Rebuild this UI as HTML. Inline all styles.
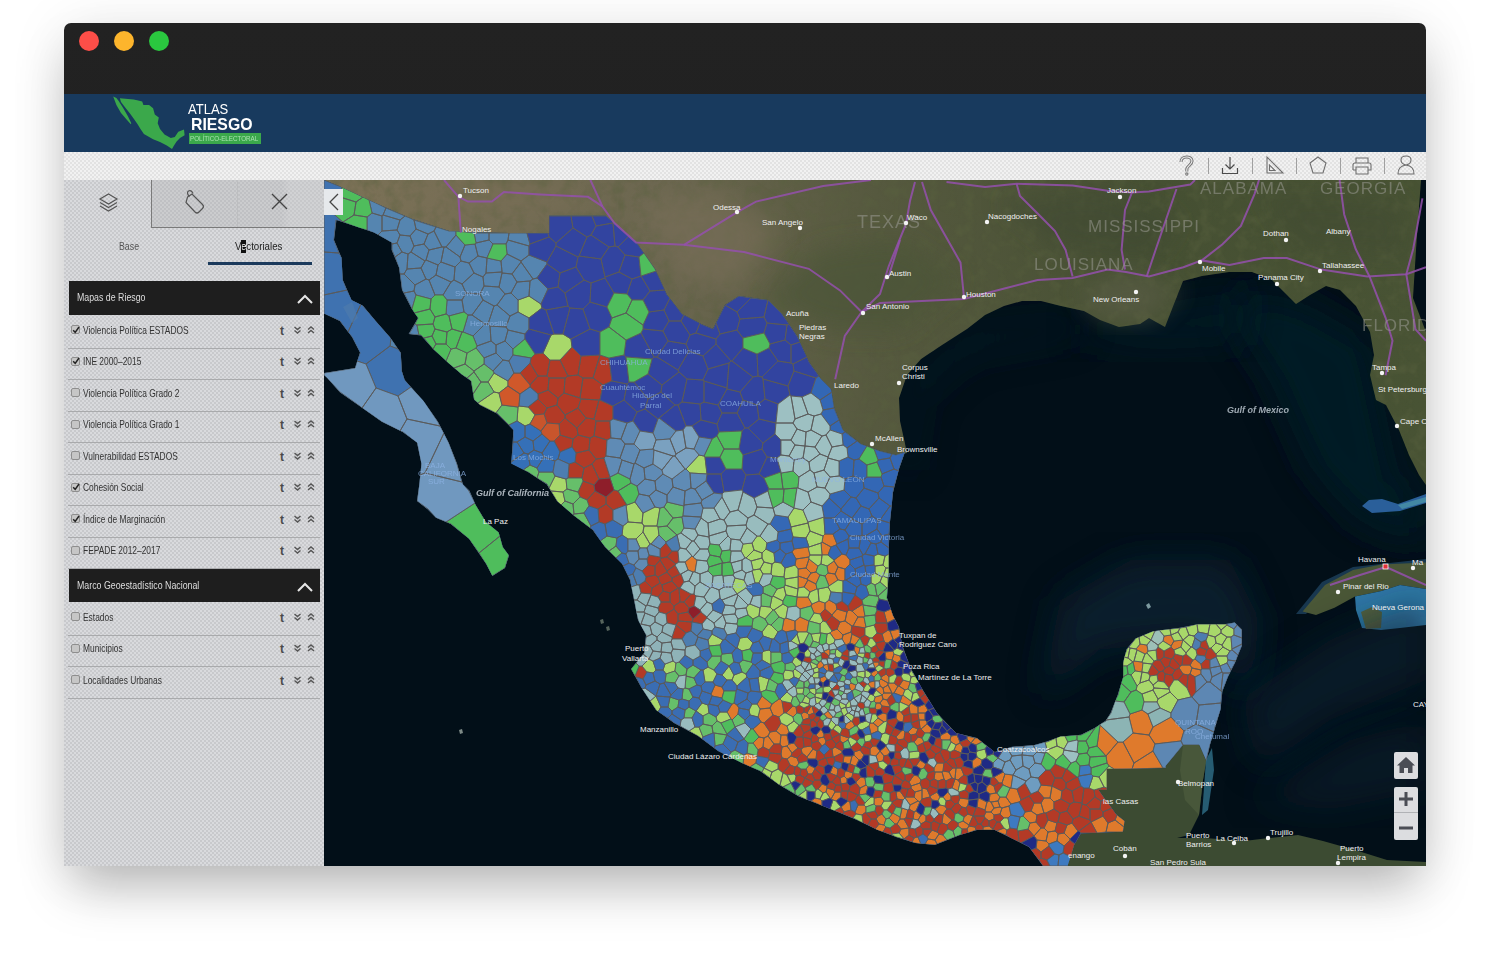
<!DOCTYPE html>
<html><head><meta charset="utf-8">
<style>
*{margin:0;padding:0;box-sizing:border-box}
html,body{width:1485px;height:958px;overflow:hidden;background:#fff;font-family:"Liberation Sans",sans-serif}
.a{position:absolute}
#win{left:64px;top:23px;width:1362px;height:843px;border-radius:7px 7px 0 0;background:linear-gradient(#222 0,#1c1c1c 100%);box-shadow:0 28px 48px -8px rgba(0,0,0,0.25),0 4px 60px 0 rgba(0,0,0,0.09)}
.dot{top:31px;width:20px;height:20px;border-radius:50%}
#hdr{left:64px;top:94px;width:1362px;height:58px;background:#183a5e}
#tb{left:64px;top:152px;width:1362px;height:28px;background:repeating-conic-gradient(#f1f1f1 0 25%,#e2e2e2 0 50%) 0 0/4px 4px}
#side{left:64px;top:180px;width:260px;height:686px;background:repeating-conic-gradient(#d9dadd 0 25%,#c8c9cc 0 50%) 0 0/4px 4px}
#map{left:324px;top:180px;width:1102px;height:686px;background:#0b1620;overflow:hidden}
.sep{top:158px;width:1px;height:16px;background:#a0a0a0}
.st{white-space:nowrap;transform-origin:0 0;transform:scaleX(.8)}
.row{left:68px;width:252px;height:1px;background:#a9aaac}
.cb{left:71px;width:9px;height:9px;border:1px solid #8e8e8e;border-radius:2px;background:#c6c6c6}
.lbl{left:83px;font-size:10.5px;color:#333}
.ti{left:280px;font-size:12px;font-weight:bold;color:#4a4a4a}
.sech{left:69px;width:251px;height:34px;background:#1e1e1e}
.sect{left:77px;font-size:11px;color:#ddd}
</style></head><body>
<div id="win" class="a"></div>
<div class="a dot" style="left:79px;background:#fd4e48"></div>
<div class="a dot" style="left:114px;background:#fdb52c"></div>
<div class="a dot" style="left:149px;background:#2ac73f"></div>
<div id="hdr" class="a"></div>
<!-- logo -->
<svg class="a" style="left:105px;top:90px" width="90" height="62" viewBox="105 90 90 62">
<path fill="#3ba84b" d="M119.9,98.2 L133.6,99.4 L137.1,100.3 L142.2,101.4 L143.4,104.9 L149.1,104.9 L153.1,108.3 L154.8,114.6 L158.8,117.5 L157.7,123.2 L160,128.9 L164.5,134.6 L170.8,138.1 L174.8,136.9 L178.3,131.8 L184,129.5 L184.6,135.2 L180,138.1 L176.6,141.5 L173.7,146.1 L172,149 L166.8,145.5 L160,142.1 L153.1,139.2 L143.9,134.1 L140.5,128.9 L137.6,124.3 L133.6,118.6 L129.6,112.9 L125,107.2 L121,102 Z M113.2,96.6 L116.4,98 L118.7,100.9 L123.3,108.3 L127.9,116.3 L131.3,123.2 L130.8,124.3 L126.8,119.8 L121,112.9 L116.4,104.9 Z"/>
</svg>
<div class="a" style="left:188px;top:101px;font-size:14px;color:#fff;white-space:nowrap;transform-origin:0 0;transform:scaleX(.93)">ATLAS</div>
<div class="a" style="left:191px;top:115px;font-size:17px;font-weight:bold;color:#fff;white-space:nowrap;transform-origin:0 0;transform:scaleX(.93)">RIESGO</div>
<div class="a" style="left:189px;top:133px;width:72px;height:11px;background:#3ba84b"></div>
<div class="a" style="left:190px;top:134px;font-size:8px;color:#a9e2b0;white-space:nowrap;transform-origin:0 0;transform:scaleX(.78)">POLÍTICO-ELECTORAL</div>

<div id="tb" class="a"></div>
<!-- toolbar icons -->
<svg class="a" style="left:1170px;top:152px" width="256" height="28" viewBox="1170 152 256 28" fill="none" stroke="#6e6e6e" stroke-width="1.1">
<path d="M1181,162 C1181,155.5 1192,155.5 1192,161 C1192,165 1186.8,166 1186.8,169 L1186.8,171.5" stroke="#7a7a7a" stroke-width="3.2"/>
<path d="M1181,162 C1181,155.5 1192,155.5 1192,161 C1192,165 1186.8,166 1186.8,169 L1186.8,171.5" stroke="#ececec" stroke-width="1.1"/>
<circle cx="1186.8" cy="174" r="1.7" fill="#7a7a7a" stroke="none"/><circle cx="1186.8" cy="174" r="0.6" fill="#ececec" stroke="none"/>
<path d="M1230,157 L1230,169 M1225.5,164.5 L1230,169 L1234.5,164.5 M1222.5,168 L1222.5,173.5 L1237.5,173.5 L1237.5,168" stroke="#4c4c4c" stroke-width="1.2"/>
<path d="M1267,157 L1267,173 L1283,173 Z M1269.5,165 L1269.5,170.5 L1275,170.5 Z"/>
<path d="M1318,157 L1326,163 L1323,173 L1313,173 L1310,163 Z"/>
<path d="M1356,163 L1356,158 L1368,158 L1368,163 M1353,170 L1353,165 Q1353,163 1355,163 L1369,163 Q1371,163 1371,165 L1371,170 L1368,170 M1356,170 L1353,170 M1356,167 L1368,167 L1368,174 L1356,174 Z"/>
<path d="M1398,174 Q1398,166 1406,165 Q1414,166 1414,174 Z M1406,165 Q1401,164 1401,160 Q1401,156 1406,156 Q1411,156 1411,160 Q1411,164 1406,165"/>
</svg>
<div class="a sep" style="left:1208px"></div>
<div class="a sep" style="left:1252px"></div>
<div class="a sep" style="left:1296px"></div>
<div class="a sep" style="left:1340px"></div>
<div class="a sep" style="left:1384px"></div>

<div id="side" class="a"></div>
<!-- tabs -->
<div class="a" style="left:151px;top:180px;width:173px;height:48px;background:linear-gradient(90deg,rgba(255,255,255,0) 0,rgba(255,255,255,0) 75%,rgba(255,255,255,.12) 80%,rgba(255,255,255,.12) 100%),repeating-conic-gradient(#cbccce 0 25%,#bfc0c3 0 50%) 0 0/4px 4px;border-left:1px solid #7a7a7a;border-bottom:1px solid #7a7a7a"></div>
<div class="a" style="left:237px;top:181px;width:1px;height:46px;background:#bdbec0"></div>
<svg class="a" style="left:90px;top:185px" width="240" height="36" viewBox="90 185 240 36" fill="none" stroke="#555" stroke-width="1.2">
<path d="M108.5,194 L117,199 L108.5,204 L100,199 Z"/>
<path d="M100,202.5 L108.5,207.5 L117,202.5"/>
<path d="M100,206 L108.5,211 L117,206"/>
<path d="M187.5,197 L192,194 L202.5,204.5 Q204.5,206.5 202.5,208.5 L199,212 Q197,214 195,212 L186,202.5 Z"/>
<path d="M189.5,196.5 Q186,193 188.5,191 Q191,189.5 193,193.5"/>
<path d="M272,194 L287,209 M287,194 L272,209" stroke="#444" stroke-width="1.4"/>
</svg>
<div class="a st" style="left:119px;top:240px;font-size:11px;color:#555">Base</div>
<div class="a" style="left:235px;top:240px;font-size:11px;color:#222;white-space:nowrap;transform-origin:0 0;transform:scaleX(.88)">Vectoriales</div>
<div class="a" style="left:241px;top:240px;width:5px;height:12.5px;background:#111"></div>
<div class="a" style="left:240.6px;top:240px;font-size:11px;color:#fff;white-space:nowrap;transform-origin:0 0;transform:scaleX(.88);clip-path:inset(0 0 0 1px)">e</div>
<div class="a" style="left:208px;top:262px;width:104px;height:3px;background:#1b3a5c"></div>

<!-- section 1 -->
<div class="a sech" style="top:281px"></div>
<div class="a st sect" style="top:291px">Mapas de Riesgo</div>
<svg class="a" style="left:296px;top:292px" width="20" height="14" viewBox="0 0 20 14"><path d="M2,11 L9,4 L16,11" fill="none" stroke="#e6e6e6" stroke-width="2"/></svg>

<div class="a cb" style="top:325.0px"></div>
<svg class="a" style="left:72px;top:325.5px" width="8" height="8" viewBox="0 0 8 8"><path d="M1.2,4.2 L3.2,6.4 L7,1" fill="none" stroke="#222" stroke-width="1.5"/></svg>
<div class="a st lbl" style="top:323.5px">Violencia Política ESTADOS</div>
<div class="a ti" style="top:323.5px">t</div>
<svg class="a" style="left:293px;top:325.5px" width="24" height="9" viewBox="0 0 24 9"><path d="M1.5,1 L4.5,3.5 L7.5,1 M1.5,4.5 L4.5,7 L7.5,4.5 M15,3.5 L18,1 L21,3.5 M15,7 L18,4.5 L21,7" fill="none" stroke="#555" stroke-width="1.4"/></svg>
<div class="a cb" style="top:356.5px"></div>
<svg class="a" style="left:72px;top:357.0px" width="8" height="8" viewBox="0 0 8 8"><path d="M1.2,4.2 L3.2,6.4 L7,1" fill="none" stroke="#222" stroke-width="1.5"/></svg>
<div class="a st lbl" style="top:355.0px">INE 2000–2015</div>
<div class="a ti" style="top:355.0px">t</div>
<svg class="a" style="left:293px;top:357.0px" width="24" height="9" viewBox="0 0 24 9"><path d="M1.5,1 L4.5,3.5 L7.5,1 M1.5,4.5 L4.5,7 L7.5,4.5 M15,3.5 L18,1 L21,3.5 M15,7 L18,4.5 L21,7" fill="none" stroke="#555" stroke-width="1.4"/></svg>
<div class="a cb" style="top:388.0px"></div>
<div class="a st lbl" style="top:386.5px">Violencia Política Grado 2</div>
<div class="a ti" style="top:386.5px">t</div>
<svg class="a" style="left:293px;top:388.5px" width="24" height="9" viewBox="0 0 24 9"><path d="M1.5,1 L4.5,3.5 L7.5,1 M1.5,4.5 L4.5,7 L7.5,4.5 M15,3.5 L18,1 L21,3.5 M15,7 L18,4.5 L21,7" fill="none" stroke="#555" stroke-width="1.4"/></svg>
<div class="a cb" style="top:419.5px"></div>
<div class="a st lbl" style="top:418.0px">Violencia Política Grado 1</div>
<div class="a ti" style="top:418.0px">t</div>
<svg class="a" style="left:293px;top:420.0px" width="24" height="9" viewBox="0 0 24 9"><path d="M1.5,1 L4.5,3.5 L7.5,1 M1.5,4.5 L4.5,7 L7.5,4.5 M15,3.5 L18,1 L21,3.5 M15,7 L18,4.5 L21,7" fill="none" stroke="#555" stroke-width="1.4"/></svg>
<div class="a cb" style="top:451.0px"></div>
<div class="a st lbl" style="top:449.5px">Vulnerabilidad ESTADOS</div>
<div class="a ti" style="top:449.5px">t</div>
<svg class="a" style="left:293px;top:451.5px" width="24" height="9" viewBox="0 0 24 9"><path d="M1.5,1 L4.5,3.5 L7.5,1 M1.5,4.5 L4.5,7 L7.5,4.5 M15,3.5 L18,1 L21,3.5 M15,7 L18,4.5 L21,7" fill="none" stroke="#555" stroke-width="1.4"/></svg>
<div class="a cb" style="top:482.5px"></div>
<svg class="a" style="left:72px;top:483.0px" width="8" height="8" viewBox="0 0 8 8"><path d="M1.2,4.2 L3.2,6.4 L7,1" fill="none" stroke="#222" stroke-width="1.5"/></svg>
<div class="a st lbl" style="top:481.0px">Cohesión Social</div>
<div class="a ti" style="top:481.0px">t</div>
<svg class="a" style="left:293px;top:483.0px" width="24" height="9" viewBox="0 0 24 9"><path d="M1.5,1 L4.5,3.5 L7.5,1 M1.5,4.5 L4.5,7 L7.5,4.5 M15,3.5 L18,1 L21,3.5 M15,7 L18,4.5 L21,7" fill="none" stroke="#555" stroke-width="1.4"/></svg>
<div class="a cb" style="top:514.0px"></div>
<svg class="a" style="left:72px;top:514.5px" width="8" height="8" viewBox="0 0 8 8"><path d="M1.2,4.2 L3.2,6.4 L7,1" fill="none" stroke="#222" stroke-width="1.5"/></svg>
<div class="a st lbl" style="top:512.5px">Índice de Marginación</div>
<div class="a ti" style="top:512.5px">t</div>
<svg class="a" style="left:293px;top:514.5px" width="24" height="9" viewBox="0 0 24 9"><path d="M1.5,1 L4.5,3.5 L7.5,1 M1.5,4.5 L4.5,7 L7.5,4.5 M15,3.5 L18,1 L21,3.5 M15,7 L18,4.5 L21,7" fill="none" stroke="#555" stroke-width="1.4"/></svg>
<div class="a cb" style="top:545.5px"></div>
<div class="a st lbl" style="top:544.0px">FEPADE 2012–2017</div>
<div class="a ti" style="top:544.0px">t</div>
<svg class="a" style="left:293px;top:546.0px" width="24" height="9" viewBox="0 0 24 9"><path d="M1.5,1 L4.5,3.5 L7.5,1 M1.5,4.5 L4.5,7 L7.5,4.5 M15,3.5 L18,1 L21,3.5 M15,7 L18,4.5 L21,7" fill="none" stroke="#555" stroke-width="1.4"/></svg>
<div class="a cb" style="top:612.0px"></div>
<div class="a st lbl" style="top:610.5px">Estados</div>
<div class="a ti" style="top:610.5px">t</div>
<svg class="a" style="left:293px;top:612.5px" width="24" height="9" viewBox="0 0 24 9"><path d="M1.5,1 L4.5,3.5 L7.5,1 M1.5,4.5 L4.5,7 L7.5,4.5 M15,3.5 L18,1 L21,3.5 M15,7 L18,4.5 L21,7" fill="none" stroke="#555" stroke-width="1.4"/></svg>
<div class="a cb" style="top:643.5px"></div>
<div class="a st lbl" style="top:642.0px">Municipios</div>
<div class="a ti" style="top:642.0px">t</div>
<svg class="a" style="left:293px;top:644.0px" width="24" height="9" viewBox="0 0 24 9"><path d="M1.5,1 L4.5,3.5 L7.5,1 M1.5,4.5 L4.5,7 L7.5,4.5 M15,3.5 L18,1 L21,3.5 M15,7 L18,4.5 L21,7" fill="none" stroke="#555" stroke-width="1.4"/></svg>
<div class="a cb" style="top:675.0px"></div>
<div class="a st lbl" style="top:673.5px">Localidades Urbanas</div>
<div class="a ti" style="top:673.5px">t</div>
<svg class="a" style="left:293px;top:675.5px" width="24" height="9" viewBox="0 0 24 9"><path d="M1.5,1 L4.5,3.5 L7.5,1 M1.5,4.5 L4.5,7 L7.5,4.5 M15,3.5 L18,1 L21,3.5 M15,7 L18,4.5 L21,7" fill="none" stroke="#555" stroke-width="1.4"/></svg>
<div class="a row" style="top:347.5px"></div>
<div class="a row" style="top:379.0px"></div>
<div class="a row" style="top:410.5px"></div>
<div class="a row" style="top:442.0px"></div>
<div class="a row" style="top:473.5px"></div>
<div class="a row" style="top:505.0px"></div>
<div class="a row" style="top:536.5px"></div>
<div class="a row" style="top:567.5px"></div>
<div class="a row" style="top:634.5px"></div>
<div class="a row" style="top:666.0px"></div>
<div class="a row" style="top:697.5px"></div>
<!-- section 2 -->
<div class="a sech" style="top:569px;height:33px"></div>
<div class="a st sect" style="top:579px">Marco Geoestadístico Nacional</div>
<svg class="a" style="left:296px;top:580px" width="20" height="14" viewBox="0 0 20 14"><path d="M2,11 L9,4 L16,11" fill="none" stroke="#e6e6e6" stroke-width="2"/></svg>

<div id="map" class="a">
<svg width="1102" height="686" viewBox="324 180 1102 686" style="position:absolute;left:0;top:0"><rect x="324" y="180" width="1102" height="686" fill="#020f18"/>
<filter id="bl" x="-20%" y="-20%" width="140%" height="140%"><feGaussianBlur stdDeviation="18"/></filter>
<polygon fill="#061c26" points="1240.0,290.0 1300.0,300.0 1370.0,340.0 1400.0,480.0 1426.0,500.0 1426.0,545.0 1360.0,525.0 1310.0,470.0 1270.0,380.0 1230.0,320.0" opacity="0.9" filter="url(#bl)"/>
<polygon fill="#061c26" points="1080.0,320.0 1180.0,300.0 1250.0,290.0 1240.0,345.0 1150.0,350.0 1080.0,340.0" opacity="0.7" filter="url(#bl)"/>
<polygon fill="#061c26" points="900.0,470.0 905.0,380.0 960.0,330.0 1080.0,315.0 1080.0,335.0 970.0,355.0 922.0,400.0 915.0,470.0" opacity="0.6" filter="url(#bl)"/>
<polygon fill="#072030" points="1040.0,700.0 1060.0,600.0 1130.0,560.0 1230.0,560.0 1260.0,620.0 1250.0,700.0 1200.0,640.0 1100.0,650.0" opacity="0.8" filter="url(#bl)"/>
<defs><linearGradient id="usg" x1="324" y1="0" x2="1426" y2="0" gradientUnits="userSpaceOnUse"><stop offset="0" stop-color="#7c7257"/><stop offset="0.3" stop-color="#6c6750"/><stop offset="0.5" stop-color="#56593f"/><stop offset="0.75" stop-color="#465033"/><stop offset="1" stop-color="#485334"/></linearGradient></defs>
<polygon fill="url(#usg)" points="324.0,180.0 1426.0,180.0 1426.0,485.0 1419.0,475.0 1409.0,455.0 1399.0,430.0 1386.0,405.0 1376.0,400.0 1370.0,375.0 1374.0,355.0 1370.0,332.0 1356.0,306.0 1340.0,290.0 1326.0,286.0 1310.0,295.0 1296.0,304.0 1287.0,295.0 1271.0,279.0 1252.0,272.0 1229.0,272.0 1202.0,276.0 1183.0,281.0 1172.0,309.0 1165.0,327.0 1149.0,318.0 1140.0,324.0 1119.0,327.0 1100.0,320.0 1084.0,311.0 1061.0,306.0 1041.0,301.0 1022.0,301.0 1004.0,306.0 985.0,315.0 967.0,329.0 942.0,345.0 921.0,359.0 907.0,375.0 899.0,398.0 900.0,421.0 907.0,453.0 896.0,455.0 880.0,451.0 861.0,444.0 843.0,430.0 834.0,407.0 831.0,389.0 821.0,379.0 809.0,362.0 797.0,336.0 782.0,314.0 768.0,300.0 739.0,296.0 725.0,305.0 713.0,329.0 701.0,324.0 682.0,314.0 667.0,295.0 655.0,269.0 636.0,242.0 614.0,223.0 605.6,215.7 549.0,215.7 549.0,233.4 474.0,232.6 449.0,231.0 411.6,218.8 374.0,202.5 336.5,185.0" />
<filter id="turb" x="0" y="0" width="100%" height="100%"><feTurbulence type="fractalNoise" baseFrequency="0.08" numOctaves="3" seed="4"/><feColorMatrix values="0 0 0 0 0.1  0 0 0 0 0.12  0 0 0 0 0.05  0 0 0 -2.2 1.25"/></filter>
<clipPath id="usclip"><polygon points="324.0,180.0 1426.0,180.0 1426.0,485.0 1419.0,475.0 1409.0,455.0 1399.0,430.0 1386.0,405.0 1376.0,400.0 1370.0,375.0 1374.0,355.0 1370.0,332.0 1356.0,306.0 1340.0,290.0 1326.0,286.0 1310.0,295.0 1296.0,304.0 1287.0,295.0 1271.0,279.0 1252.0,272.0 1229.0,272.0 1202.0,276.0 1183.0,281.0 1172.0,309.0 1165.0,327.0 1149.0,318.0 1140.0,324.0 1119.0,327.0 1100.0,320.0 1084.0,311.0 1061.0,306.0 1041.0,301.0 1022.0,301.0 1004.0,306.0 985.0,315.0 967.0,329.0 942.0,345.0 921.0,359.0 907.0,375.0 899.0,398.0 900.0,421.0 907.0,453.0 896.0,455.0 880.0,451.0 861.0,444.0 843.0,430.0 834.0,407.0 831.0,389.0 821.0,379.0 809.0,362.0 797.0,336.0 782.0,314.0 768.0,300.0 739.0,296.0 725.0,305.0 713.0,329.0 701.0,324.0 682.0,314.0 667.0,295.0 655.0,269.0 636.0,242.0 614.0,223.0 605.6,215.7 549.0,215.7 549.0,233.4 474.0,232.6 449.0,231.0 411.6,218.8 374.0,202.5 336.5,185.0"/></clipPath>
<rect x="324" y="180" width="1102" height="320" filter="url(#turb)" clip-path="url(#usclip)" opacity="0.55"/>
<filter id="bl2" x="-30%" y="-30%" width="160%" height="160%"><feGaussianBlur stdDeviation="12"/></filter>
<polygon fill="#4b5539" points="760.0,300.0 820.0,250.0 900.0,240.0 960.0,280.0 900.0,330.0 830.0,330.0" opacity="0.7" filter="url(#bl2)"/>
<polygon fill="#7a705a" points="640.0,200.0 720.0,190.0 780.0,230.0 740.0,290.0 680.0,280.0" opacity="0.6" filter="url(#bl2)"/>
<polygon fill="#7b7059" points="380.0,185.0 560.0,185.0 600.0,205.0 520.0,215.0 420.0,205.0" opacity="0.5" filter="url(#bl2)"/>
<polygon fill="#3c4632" points="1000.0,200.0 1100.0,190.0 1180.0,220.0 1150.0,260.0 1060.0,250.0" opacity="0.5" filter="url(#bl2)"/>
<polygon fill="#3f4a33" points="1260.0,190.0 1400.0,200.0 1410.0,260.0 1300.0,250.0" opacity="0.5" filter="url(#bl2)"/>
<polygon fill="#5d5f48" points="1080.0,290.0 1130.0,270.0 1180.0,290.0 1150.0,320.0 1100.0,318.0" opacity="0.6" filter="url(#bl2)"/>
<polygon fill="#020f18" points="1421.0,180.0 1426.0,180.0 1426.0,332.0 1413.0,298.0 1416.0,250.0" />
<polygon fill="#2a5f9a" points="1362.0,506.0 1369.0,500.0 1382.0,499.0 1398.0,504.0 1426.0,494.0 1426.0,503.0 1400.0,511.0 1372.0,513.0" />
<polygon fill="#4f9aa8" points="1398.0,505.0 1426.0,497.0 1426.0,502.0 1402.0,509.0" opacity="0.7"/>
<polygon fill="#2e5f86" points="1296.0,614.0 1322.0,582.0 1353.0,567.0 1426.0,559.0 1426.0,566.0 1356.0,574.0 1328.0,590.0 1306.0,614.0" opacity="0.5"/>
<polygon fill="#4a5737" points="1302.6,611.5 1325.0,585.0 1353.0,570.0 1381.5,564.5 1426.0,562.6 1426.0,589.0 1400.0,585.0 1381.5,591.0 1355.0,596.5 1334.5,607.7 1316.0,615.0" />
<polygon fill="#2f78a6" points="1355.0,596.5 1381.5,591.0 1400.0,585.0 1426.0,589.0 1426.0,625.0 1400.0,628.0 1381.0,630.0 1362.0,628.0 1356.0,610.0" />
<polygon fill="#55613f" points="1361.0,612.0 1372.0,607.0 1382.0,612.0 1381.0,628.0 1366.0,629.0" />
<polygon fill="#0a2233" points="1240.0,700.0 1330.0,640.0 1426.0,600.0 1426.0,680.0 1330.0,720.0 1260.0,770.0" opacity="0.6" filter="url(#bl)"/>
<polygon fill="#0a2233" points="1250.0,800.0 1350.0,740.0 1426.0,720.0 1426.0,790.0 1330.0,810.0" opacity="0.5" filter="url(#bl)"/>
<polygon fill="#3c4b32" points="1100.0,769.0 1165.6,768.0 1165.6,766.0 1183.4,744.8 1199.3,744.8 1206.4,760.8 1203.0,780.0 1199.0,815.0 1189.0,835.0 1177.0,838.0 1205.0,838.0 1244.0,841.0 1269.0,838.0 1298.0,835.0 1323.0,841.0 1355.0,850.0 1387.0,860.0 1426.0,862.0 1426.0,866.0 1060.0,866.0 1074.0,845.6 1081.0,833.4 1123.0,831.7 1124.6,821.0 1116.0,814.0 1098.6,790.0 1107.0,790.0" />
<polygon fill="#4b5a3c" points="1183.0,745.0 1199.0,745.0 1206.0,761.0 1203.0,780.0 1199.0,815.0 1185.0,800.0 1180.0,770.0" opacity="0.8"/>
<polygon fill="#2f6f8a" points="1206.0,760.0 1212.0,748.0 1214.0,770.0 1208.0,810.0 1202.0,815.0" opacity="0.8"/>
<clipPath id="mexclip"><polygon points="324.0,180.0 336.5,185.0 374.0,202.5 411.6,218.8 449.0,231.0 474.0,232.6 549.0,233.4 549.0,215.7 605.6,215.7 612.0,221.0 614.0,223.0 636.0,242.0 655.0,269.0 667.0,295.0 682.0,314.0 701.0,324.0 713.0,329.0 725.0,305.0 739.0,296.0 768.0,300.0 782.0,314.0 797.0,336.0 809.0,362.0 821.0,379.0 831.0,389.0 834.0,407.0 843.0,430.0 861.0,444.0 880.0,451.0 896.0,455.0 905.0,452.0 899.0,469.0 893.0,492.6 890.0,522.0 888.7,551.0 888.7,574.5 887.0,597.8 893.0,615.4 899.0,627.0 902.0,644.6 910.6,668.0 922.0,688.5 937.0,713.0 956.0,733.0 977.0,738.0 994.7,752.0 1012.0,746.8 1034.5,745.0 1046.7,741.6 1060.5,736.4 1081.0,734.7 1095.0,727.7 1105.6,720.8 1110.6,712.9 1117.7,695.0 1123.0,677.4 1123.0,663.0 1126.6,649.0 1135.5,638.4 1153.0,631.3 1180.0,627.7 1197.6,624.2 1224.0,624.2 1234.8,622.4 1242.0,629.5 1242.0,645.5 1234.8,663.2 1227.7,677.4 1222.4,691.6 1220.6,709.3 1215.3,727.0 1210.0,744.8 1206.4,760.8 1199.3,744.8 1183.4,744.8 1165.6,766.0 1165.6,768.0 1107.0,769.0 1107.0,790.0 1098.6,790.0 1116.0,814.0 1124.6,821.0 1123.0,831.7 1081.0,833.4 1074.0,845.6 1067.5,866.0 1043.0,866.0 1029.0,847.0 1012.0,838.6 994.7,830.0 977.0,830.0 960.0,835.0 934.8,845.0 915.0,843.0 896.0,837.0 876.5,829.5 857.0,820.0 837.7,812.0 818.0,804.0 798.8,796.5 779.4,785.0 760.0,771.0 744.0,764.0 718.0,751.0 698.0,736.0 674.0,723.0 656.0,710.0 641.0,687.0 631.0,669.0 644.0,653.0 646.0,635.0 638.0,620.0 630.0,580.0 622.0,563.7 605.0,547.0 592.7,530.0 574.0,515.7 557.0,501.0 546.8,484.4 528.0,472.0 511.3,463.5 513.4,430.0 496.7,413.4 480.0,405.0 474.0,399.6 471.0,381.0 461.8,374.6 449.0,363.6 433.6,349.5 421.0,335.4 408.6,334.0 418.0,318.0 411.7,308.8 402.0,290.0 399.0,267.6 391.6,250.0 391.6,242.6 374.0,232.6 359.0,227.6 336.5,220.0 334.0,240.0 341.5,257.6 342.8,280.0 351.5,300.0 363.0,305.7 375.7,321.0 389.8,337.0 400.7,352.6 402.0,371.4 404.7,380.0 423.5,401.0 438.0,421.8 448.6,442.6 457.0,463.5 463.0,484.4 469.4,490.6 475.7,505.0 486.0,522.0 498.7,532.4 502.8,547.0 509.0,555.4 505.0,568.0 492.4,576.0 486.0,563.7 469.0,538.7 450.6,524.0 436.0,517.8 427.7,509.4 417.0,501.0 419.3,484.4 421.4,463.5 417.0,442.6 402.6,432.0 381.8,421.8 360.9,407.0 340.0,392.5 327.0,377.7 324.0,375.0 324.0,373.0 355.0,368.0 360.0,352.6 352.0,337.0 339.7,321.0 324.0,313.5"/></clipPath>
<polygon fill="#4d7db0" points="324.0,180.0 336.5,185.0 374.0,202.5 411.6,218.8 449.0,231.0 474.0,232.6 549.0,233.4 549.0,215.7 605.6,215.7 612.0,221.0 614.0,223.0 636.0,242.0 655.0,269.0 667.0,295.0 682.0,314.0 701.0,324.0 713.0,329.0 725.0,305.0 739.0,296.0 768.0,300.0 782.0,314.0 797.0,336.0 809.0,362.0 821.0,379.0 831.0,389.0 834.0,407.0 843.0,430.0 861.0,444.0 880.0,451.0 896.0,455.0 905.0,452.0 899.0,469.0 893.0,492.6 890.0,522.0 888.7,551.0 888.7,574.5 887.0,597.8 893.0,615.4 899.0,627.0 902.0,644.6 910.6,668.0 922.0,688.5 937.0,713.0 956.0,733.0 977.0,738.0 994.7,752.0 1012.0,746.8 1034.5,745.0 1046.7,741.6 1060.5,736.4 1081.0,734.7 1095.0,727.7 1105.6,720.8 1110.6,712.9 1117.7,695.0 1123.0,677.4 1123.0,663.0 1126.6,649.0 1135.5,638.4 1153.0,631.3 1180.0,627.7 1197.6,624.2 1224.0,624.2 1234.8,622.4 1242.0,629.5 1242.0,645.5 1234.8,663.2 1227.7,677.4 1222.4,691.6 1220.6,709.3 1215.3,727.0 1210.0,744.8 1206.4,760.8 1199.3,744.8 1183.4,744.8 1165.6,766.0 1165.6,768.0 1107.0,769.0 1107.0,790.0 1098.6,790.0 1116.0,814.0 1124.6,821.0 1123.0,831.7 1081.0,833.4 1074.0,845.6 1067.5,866.0 1043.0,866.0 1029.0,847.0 1012.0,838.6 994.7,830.0 977.0,830.0 960.0,835.0 934.8,845.0 915.0,843.0 896.0,837.0 876.5,829.5 857.0,820.0 837.7,812.0 818.0,804.0 798.8,796.5 779.4,785.0 760.0,771.0 744.0,764.0 718.0,751.0 698.0,736.0 674.0,723.0 656.0,710.0 641.0,687.0 631.0,669.0 644.0,653.0 646.0,635.0 638.0,620.0 630.0,580.0 622.0,563.7 605.0,547.0 592.7,530.0 574.0,515.7 557.0,501.0 546.8,484.4 528.0,472.0 511.3,463.5 513.4,430.0 496.7,413.4 480.0,405.0 474.0,399.6 471.0,381.0 461.8,374.6 449.0,363.6 433.6,349.5 421.0,335.4 408.6,334.0 418.0,318.0 411.7,308.8 402.0,290.0 399.0,267.6 391.6,250.0 391.6,242.6 374.0,232.6 359.0,227.6 336.5,220.0 334.0,240.0 341.5,257.6 342.8,280.0 351.5,300.0 363.0,305.7 375.7,321.0 389.8,337.0 400.7,352.6 402.0,371.4 404.7,380.0 423.5,401.0 438.0,421.8 448.6,442.6 457.0,463.5 463.0,484.4 469.4,490.6 475.7,505.0 486.0,522.0 498.7,532.4 502.8,547.0 509.0,555.4 505.0,568.0 492.4,576.0 486.0,563.7 469.0,538.7 450.6,524.0 436.0,517.8 427.7,509.4 417.0,501.0 419.3,484.4 421.4,463.5 417.0,442.6 402.6,432.0 381.8,421.8 360.9,407.0 340.0,392.5 327.0,377.7 324.0,375.0 324.0,373.0 355.0,368.0 360.0,352.6 352.0,337.0 339.7,321.0 324.0,313.5" />
<g clip-path="url(#mexclip)">
<g stroke="#5a5a5a" stroke-width="0.9" stroke-linejoin="round">
<path fill="#df7a2c" d="M905 798 900 791 896 792 897 799 903 800 905 798ZM797 766 799 763 797 758 791 756 787 759 790 765 795 767ZM1149 735 1155 744 1181 741 1184 731 1171 717 1153 727ZM1058 834 1057 841 1064 846 1070 840 1070 839 1064 833ZM845 621 852 626 853 626 858 617 852 611 849 610 847 612ZM1011 788 1010 788 1006 797 1011 804 1019 802 1021 800 1017 789ZM972 761 973 769 981 765 982 760 977 757ZM834 560 834 561 838 567 845 569 850 564 850 560 846 555 842 554ZM830 633 835 640 842 639 843 635 837 629 832 631ZM890 631 888 630 882 634 884 641 886 643 888 643 893 639ZM1004 818 1008 818 1011 815 1009 806 1002 808 1000 814ZM770 732 764 723 761 722 753 729 759 737 764 738 768 736ZM1044 798 1050 798 1052 786 1052 786 1041 785 1038 791ZM943 835 939 834 935 840 937 844 947 840ZM1142 710 1130 714 1129 717 1133 733 1149 735 1153 727 1148 714ZM1134 763 1123 742 1118 742 1106 756 1106 756 1107 763 1109 766 1114 769 1132 769ZM1153 751 1134 763 1132 769 1163 768ZM835 792 831 799 833 800 836 801 841 797 841 792ZM914 797 918 801 920 802 922 799 922 790 915 792ZM738 714 739 708 737 705 734 703 732 704 727 712 731 719 732 720ZM834 790 827 788 826 792 830 798 831 799 835 792ZM852 634 851 632 843 635 842 639 845 644 846 645 850 643ZM804 587 808 580 807 579 798 576 798 577 798 588ZM905 732 903 730 901 731 896 737 898 740 904 739ZM877 716 878 718 884 722 887 721 887 720 887 714 883 713ZM860 788 866 785 865 778 861 777 856 782 856 783ZM930 797 932 800 938 801 940 797 937 792 930 796ZM1091 822 1097 833 1106 832 1108 823 1103 816ZM832 616 840 622 845 621 847 612 837 609 832 615ZM817 667 819 669 823 667 824 665 821 661 819 662 817 665ZM876 756 880 751 876 746 873 746 870 749 870 755ZM939 834 937 832 932 830 927 837 928 839 935 840ZM1142 662 1134 661 1133 662 1133 662 1135 671 1142 672 1143 663ZM968 805 969 800 968 799 960 798 958 803 962 807 966 808ZM1057 823 1048 820 1044 828 1048 832 1055 831ZM998 801 1000 797 997 793 996 793 990 794 989 801 991 802ZM834 757 842 753 842 751 835 747 832 749 833 757ZM882 695 883 699 887 700 892 694 892 694 892 693 884 693 882 695ZM825 603 825 609 832 615 837 609 836 604 829 600ZM812 604 811 606 814 613 820 614 825 609 825 603 819 601ZM850 802 848 801 841 807 844 812 851 810ZM808 597 797 597 796 606 800 609 811 606 812 604ZM958 826 962 829 967 829 969 826 969 825 963 821 958 823ZM918 713 918 707 911 703 909 706 909 706 910 714 911 714 918 714ZM849 685 850 689 852 691 855 689 856 685 851 683ZM847 779 844 776 840 778 841 784 847 783ZM813 749 811 746 804 747 801 749 802 753 807 757ZM1055 831 1048 832 1046 841 1049 844 1057 841 1058 834ZM773 715 770 708 760 709 758 717 761 722 764 723ZM914 742 917 746 923 743 924 742 922 738 918 737ZM822 801 820 799 815 798 811 801 818 804 822 806ZM880 703 882 706 890 707 890 706 887 700 883 699ZM1030 823 1036 822 1037 815 1031 811 1025 812 1023 816ZM897 712 896 718 898 721 903 722 904 716 901 712 899 711ZM795 621 795 630 798 632 807 632 809 621 800 617ZM809 557 796 559 795 565 798 569 806 568 809 559ZM838 567 834 561 827 566 828 573 835 574ZM919 720 919 720 925 720 925 713 918 713 918 714ZM808 547 794 549 792 552 796 559 809 557 810 555ZM843 762 849 764 850 764 852 756 844 756ZM879 824 875 829 876 830 883 832 886 827 884 825ZM968 833 976 830 975 827 969 826 967 829ZM724 691 722 687 715 685 711 694 712 696 722 698ZM685 562 688 570 693 572 695 572 697 560 693 557 692 556ZM781 754 782 758 787 759 791 756 792 753 787 746 782 747ZM1048 832 1044 828 1041 828 1034 836 1034 836 1037 840 1046 841ZM782 747 787 746 789 744 787 735 781 735 780 744ZM1115 820 1108 823 1106 832 1123 832 1124 827ZM979 798 978 799 977 807 985 810 987 802ZM1179 668 1183 674 1188 675 1190 674 1192 668 1190 665 1182 665 1180 666ZM880 751 884 756 888 755 890 752 886 746ZM856 766 859 760 854 755 852 756 850 764 855 766ZM824 737 824 734 821 729 816 735 819 738ZM984 816 985 818 989 821 994 819 994 815 991 812 986 812ZM937 763 934 768 934 771 935 772 942 772 943 771 944 763ZM909 782 911 786 920 783 921 780 918 776 914 775ZM927 724 921 729 925 733 930 733 932 729ZM747 753 744 755 743 764 744 764 750 767 756 763 757 756ZM774 744 768 736 764 738 763 747 769 750ZM918 820 921 824 926 821 926 816 923 814 921 815ZM870 723 870 723 869 726 871 734 878 731 878 727 873 723ZM1034 803 1031 811 1037 815 1044 813 1041 803ZM904 819 900 819 897 824 901 829 909 828ZM1054 809 1054 802 1050 798 1044 798 1041 803 1044 813 1046 813ZM893 813 892 814 889 818 895 824 897 824 900 819 900 817ZM1010 788 1011 788 1013 775 1005 774 1002 783 1003 785ZM911 788 915 792 922 790 922 788 920 783 911 786ZM894 683 889 683 888 683 888 685 892 693 892 694 894 693 898 686ZM1097 746 1106 756 1118 742 1100 725ZM784 713 782 701 780 699 779 699 772 704 770 708 773 715 779 717ZM854 752 854 755 859 760 861 760 864 755 860 750ZM884 693 883 688 880 686 876 689 876 690 882 695ZM1174 650 1181 647 1183 640 1174 641 1171 646 1171 647ZM874 804 876 806 881 806 884 801 881 797 874 798ZM898 686 894 693 902 696 903 695 905 690 899 686ZM825 744 826 741 824 737 819 738 818 741 822 746ZM881 709 882 706 880 703 876 703 875 708 877 710ZM797 713 796 707 793 706 786 713 793 717ZM895 619 893 615 891 609 884 612 887 623ZM1201 670 1202 669 1201 664 1195 659 1193 660 1190 665 1192 668ZM902 696 900 702 909 706 911 703 912 702 911 701 903 695ZM837 544 833 534 825 534 823 536 822 542 831 547 836 545ZM852 777 853 773 847 771 845 771 844 776 847 779ZM837 629 843 635 851 632 852 626 845 621 840 622ZM943 797 946 801 951 800 951 796 948 792ZM1070 839 1078 831 1072 823 1067 825 1064 833ZM808 759 816 759 817 751 813 749 807 757ZM809 559 806 568 811 573 816 572 818 566ZM916 811 920 802 920 802 918 801 910 805 909 809 914 812ZM863 605 863 604 852 611 858 617 864 617 865 616ZM876 819 879 824 884 825 886 819 882 814 878 816ZM827 718 831 719 833 717 828 711 824 714ZM976 745 982 742 977 738 975 738 971 743 971 743ZM894 654 893 651 885 652 886 659 892 660ZM1133 733 1123 742 1134 763 1153 751 1155 744 1149 735ZM935 809 939 814 943 815 944 813 947 809 945 806 940 805ZM892 693 888 685 883 688 884 693ZM1000 807 1002 808 1009 806 1011 804 1006 797 1000 797 998 801ZM925 713 928 710 925 705 925 704 918 707 918 713ZM960 742 957 735 951 736 950 740 951 742 956 745 960 743ZM1174 641 1171 635 1171 635 1164 636 1163 641 1171 646ZM859 795 859 795 866 794 868 787 866 785 860 788ZM935 840 928 839 925 844 935 845 937 844ZM964 817 963 821 969 825 973 816 973 816 968 814ZM883 688 888 685 888 683 881 679 879 681 880 686ZM1036 822 1030 823 1028 829 1034 836 1041 828ZM957 768 956 768 955 779 955 779 958 780 964 775 961 768ZM860 638 860 638 852 634 850 643 855 645ZM922 790 922 799 930 797 930 796 927 789 922 788ZM996 793 994 786 990 784 987 786 986 791 990 794ZM781 735 787 735 789 732 787 726 781 723 776 731ZM856 814 862 815 866 812 866 807 864 805 858 805 855 812ZM942 772 935 772 934 779 938 781 944 779ZM944 813 943 815 942 823 947 825 952 820ZM787 746 792 753 798 748 794 743 789 744ZM816 584 808 580 804 587 810 592 817 589ZM1124 827 1125 821 1117 815 1115 820ZM994 808 1000 807 998 801 991 802ZM825 676 820 678 820 681 823 683 827 679ZM1046 841 1037 840 1036 848 1041 852 1049 846 1049 844ZM952 778 949 772 943 771 942 772 944 779 946 781ZM914 838 912 842 915 843 921 844 918 837 917 837ZM837 776 838 769 833 766 830 773 837 776ZM786 618 784 619 782 630 786 632 795 630 795 621ZM909 828 901 829 899 833 904 839 909 835 909 828ZM760 709 770 708 772 704 762 696 757 704ZM881 677 881 679 888 683 889 683 889 677 886 674ZM967 739 971 743 975 738 967 736ZM845 728 849 730 855 726 852 721 851 721 846 724ZM989 801 987 802 985 810 986 812 991 812 994 808 991 802ZM845 580 845 569 838 567 835 574 838 580 843 581ZM897 663 901 660 900 656 894 654 892 660 892 660ZM806 568 798 569 798 576 807 579 811 573ZM942 740 950 740 951 736 947 732 941 735 940 738ZM873 723 878 727 884 722 878 718ZM809 718 809 715 807 713 804 712 801 714 803 720ZM883 761 884 756 880 751 880 751 876 756 878 762 878 762ZM823 667 827 671 829 671 828 664 828 664 824 665ZM890 631 893 639 894 640 900 636 899 629ZM871 673 871 675 874 677 878 673 878 672 876 670ZM918 729 913 727 908 732 911 735 916 734ZM764 738 759 737 753 743 758 750 763 747ZM924 768 926 764 920 760 916 766 921 769ZM807 579 808 580 816 584 820 575 816 572 811 573ZM927 722 925 720 919 720 920 728 921 729 927 724ZM1054 802 1061 799 1062 791 1052 786 1050 798ZM1007 830 1004 828 996 831 1006 835ZM1147 653 1148 651 1147 645 1140 644 1136 649 1137 650 1145 654ZM873 662 873 663 875 668 875 668 879 665 879 662ZM843 743 848 740 849 738 840 735 840 741ZM908 810 902 808 900 817 900 819 904 819 906 818ZM827 788 827 786 822 784 818 789 823 793 826 792ZM905 690 908 689 910 683 910 682 903 680 899 686ZM918 801 914 797 906 797 905 798 905 798 910 805ZM991 812 994 815 1000 814 1002 808 1000 807 994 808ZM829 586 838 580 835 574 828 573 825 576ZM960 783 958 780 955 779 952 788 958 791ZM874 701 876 703 880 703 883 699 882 695 875 697ZM1005 774 1003 772 994 777 999 783 1002 783ZM774 744 780 744 781 735 776 731 770 732 768 736ZM956 745 954 750 961 753 961 753 963 747 960 743ZM871 688 875 688 875 681 874 681 870 682 868 684ZM1195 677 1201 674 1201 670 1192 668 1190 674ZM809 715 814 713 812 706 811 706 807 713ZM858 617 853 626 865 628 866 627 864 617ZM815 769 815 768 809 765 806 769 808 774 812 774ZM857 655 857 655 859 653 860 648 855 646 854 650ZM952 778 955 779 956 768 953 768 949 772ZM983 827 983 830 993 830 993 829 989 826ZM829 649 824 651 824 652 829 656 830 654 830 650ZM913 819 918 820 921 815 916 811 914 812 913 819ZM822 555 828 555 831 547 822 542 821 543 822 555Z"/>
<path fill="#b33a26" d="M612 381 609 358 600 355 593 378 603 385ZM660 583 652 588 651 594 651 595 658 597 663 591 662 585ZM876 623 887 623 887 623 884 612 877 610 875 615ZM1019 802 1025 812 1031 811 1034 803 1029 796 1021 800ZM667 557 672 551 666 543 660 549 660 557 661 558ZM830 733 832 738 840 734 833 729 831 730ZM658 577 660 583 662 585 672 581 672 578 667 572ZM676 625 678 621 678 614 674 609 666 614 667 623 676 625ZM600 400 603 385 593 378 583 378 580 398 581 399 599 400ZM828 764 833 766 835 761 834 757 833 757 826 758ZM1101 801 1100 809 1103 812 1112 808 1105 799ZM658 577 655 575 646 577 645 581 652 588 660 583ZM903 680 901 676 897 676 894 683 898 686 899 686ZM802 784 805 778 800 775 796 776 795 781 801 784ZM1078 831 1079 831 1091 822 1090 820 1079 816 1073 819 1072 823ZM557 405 565 415 578 408 581 399 580 398 564 393 558 398ZM672 581 678 588 679 588 680 588 684 582 681 574 680 574 672 578ZM883 791 890 793 894 791 893 785 892 782 884 784 884 784 883 791ZM702 624 707 618 707 617 701 612 693 619 692 622ZM968 814 973 816 976 808 968 805 966 808ZM989 821 985 818 981 824 983 827 989 826ZM912 773 905 775 905 780 909 782 914 775ZM855 595 848 606 849 610 852 611 863 604 862 600ZM894 776 885 773 882 776 884 784 892 782ZM658 608 659 612 666 614 674 609 674 606 670 602 661 602ZM928 773 934 771 934 768 927 763 926 764 924 768ZM1055 764 1050 770 1055 778 1062 778 1066 769ZM768 758 769 760 778 764 782 758 781 754 770 753ZM559 424 560 435 573 439 578 435 577 428 565 418ZM1041 785 1052 786 1055 778 1050 770 1046 770 1038 778ZM528 407 535 415 544 414 547 408 538 399ZM586 418 577 428 578 435 590 438 594 436 596 421 594 419ZM606 497 595 491 587 500 589 506 598 509 606 504ZM927 789 930 786 930 781 926 778 921 780 920 783 922 788ZM1060 813 1067 811 1070 804 1061 799 1054 802 1054 809ZM1187 688 1191 697 1192 697 1196 692 1195 677 1190 674 1188 675ZM901 785 903 781 894 775 894 776 892 782 893 785ZM879 824 876 819 871 819 868 825 875 829ZM578 375 581 356 572 347 560 360 568 376ZM1017 789 1021 800 1029 796 1031 794 1025 783ZM1175 670 1179 668 1180 666 1173 658 1171 659 1169 666ZM911 742 911 735 908 732 905 732 904 739 908 743ZM1028 829 1018 831 1019 842 1021 843 1034 836 1034 836ZM834 669 833 664 828 664 829 671 833 672ZM818 761 825 758 824 755 819 750 817 751 816 759ZM909 828 909 835 914 838 917 837 915 829 910 828ZM686 633 676 625 676 625 672 637 672 639 682 639ZM847 612 849 610 848 606 842 601 836 604 837 609ZM610 478 610 477 604 458 596 459 592 464 599 479ZM946 801 945 806 947 809 951 809 955 804 951 800ZM944 779 938 781 938 789 946 788 946 781ZM1091 822 1091 822 1079 831 1081 833 1097 833ZM855 726 857 726 860 723 859 717 854 717 852 721ZM793 706 791 703 782 701 784 713 786 713ZM918 751 920 753 925 752 926 751 923 743 917 746ZM538 394 548 390 549 378 547 376 538 376 530 385 530 387ZM827 659 829 658 829 656 824 652 821 653 821 655 822 659ZM530 363 538 376 547 376 550 360 543 353 535 354 531 358ZM946 762 950 758 950 752 947 750 942 749 940 752 945 762ZM592 464 596 459 589 450 576 453 575 462 584 468ZM879 650 876 645 871 648 871 652 875 653ZM832 631 837 629 840 622 832 616 826 622ZM940 752 936 754 934 758 937 763 944 763 945 762ZM679 588 680 602 684 602 691 594 680 588ZM896 807 892 803 887 810 892 814 893 813ZM581 399 578 408 586 418 594 419 599 400ZM1104 787 1094 790 1095 797 1101 801 1105 799 1099 790 1107 790 1107 788ZM1090 809 1086 805 1082 804 1079 816 1090 820ZM870 749 873 746 870 741 865 742 863 746ZM558 398 564 393 565 378 549 378 548 390ZM813 734 810 730 804 733 802 737 803 737 811 739ZM858 795 849 791 848 791 847 800 848 801 850 802 855 800ZM842 729 840 734 840 735 849 738 850 737 850 736 849 730 845 728ZM1055 778 1052 786 1052 786 1062 791 1066 788 1066 783 1062 778ZM778 769 783 773 790 765 787 759 782 758 778 764ZM1090 809 1100 809 1101 801 1095 797 1086 805ZM841 792 841 797 847 800 848 791 842 791ZM865 635 865 628 853 626 852 626 851 632 852 634 860 638ZM598 509 599 522 605 524 613 520 613 510 606 504ZM890 668 886 669 886 674 889 677 895 674 894 670ZM867 766 866 767 867 777 873 777 875 775 875 771 868 765ZM800 725 804 733 810 730 811 728 810 725 801 724ZM589 450 590 438 578 435 573 439 572 447 576 453ZM953 768 956 768 957 768 954 759 950 758 946 762ZM839 690 840 687 837 684 832 689 832 689 832 690 839 690ZM967 776 964 775 958 780 960 783 967 785 968 784ZM1046 813 1044 813 1037 815 1036 822 1041 828 1044 828 1048 820ZM882 814 884 810 881 806 876 806 875 811 878 816ZM1081 786 1072 791 1074 802 1082 803 1084 788ZM876 643 876 645 879 650 883 651 886 643 884 641ZM920 760 919 758 909 759 913 766 916 766ZM811 720 813 720 816 716 815 714 814 713 809 715 809 718ZM564 393 580 398 583 378 578 375 568 376 565 378ZM573 439 560 435 554 441 560 452 572 447ZM908 789 906 797 914 797 915 792 911 788ZM914 812 909 809 908 810 906 818 913 819ZM830 773 826 774 830 782 832 782 837 776ZM948 829 947 825 942 823 940 824 937 832 939 834 943 835ZM584 468 575 462 569 464 568 478 582 478ZM853 773 853 773 855 766 850 764 849 764 847 771ZM927 789 930 796 937 792 938 789 930 786ZM686 633 691 631 692 622 678 621 676 625ZM595 491 594 485 583 481 578 492 580 497 587 500ZM1041 852 1041 858 1047 860 1055 854 1049 846ZM849 791 858 795 859 795 860 788 856 783 850 786ZM954 820 955 814 951 809 947 809 944 813 952 820ZM1183 656 1182 665 1190 665 1193 660 1186 654ZM662 585 663 591 670 593 678 588 672 581ZM594 436 590 438 589 450 596 459 604 458 606 456 607 440ZM817 723 820 719 820 717 816 716 813 720ZM1210 660 1216 657 1217 656 1216 654 1211 648 1209 648 1207 650 1205 656 1206 659ZM652 588 645 581 639 585 641 593 651 594ZM1164 651 1158 647 1156 650 1157 660 1160 660 1164 657ZM851 747 851 748 854 752 860 750 862 747 857 742ZM583 481 594 485 599 479 592 464 584 468 582 478ZM879 767 875 771 875 775 882 776 885 773 884 770ZM1082 804 1082 803 1074 802 1070 804 1067 811 1073 819 1079 816ZM897 824 895 824 890 828 892 834 899 833 901 829ZM660 560 667 571 675 565 676 564 667 557 661 558ZM958 803 955 804 951 809 955 814 958 813 962 807ZM842 751 844 749 843 743 840 741 836 744 835 747ZM963 747 968 747 971 743 971 743 967 739 960 742 960 743ZM969 826 975 827 978 824 974 816 973 816 969 825ZM826 622 832 616 832 615 825 609 820 614 823 621ZM943 815 939 814 934 819 934 821 940 824 942 823ZM815 780 820 780 822 775 815 769 812 774ZM819 750 822 746 818 741 812 743 811 746 813 749 817 751ZM1041 858 1041 852 1036 848 1031 850 1039 860ZM887 700 890 706 896 702 892 694ZM1160 660 1157 660 1154 661 1152 664 1159 672 1163 671 1165 668ZM902 758 899 760 899 765 902 768 904 767 907 759ZM547 423 559 424 565 418 565 415 557 405 547 408 544 414ZM594 419 596 421 610 421 613 419 613 406 600 400 599 400ZM1148 673 1150 676 1157 675 1159 672 1152 664 1152 664ZM911 714 911 722 911 723 919 720 918 714ZM1066 783 1066 788 1072 791 1081 786 1078 777 1077 777ZM870 741 873 746 876 746 880 740 872 738ZM1072 823 1073 819 1067 811 1060 813 1058 822 1067 825ZM815 714 819 710 814 706 812 706 814 713ZM832 749 835 747 836 744 832 739 826 741 825 744 830 749ZM907 748 908 743 904 739 898 740 897 743 904 748ZM920 802 925 807 931 807 932 800 930 797 922 799 920 802ZM929 759 934 758 936 754 930 749 926 751 925 752ZM993 830 995 830 996 831 1004 828 1000 822 997 822 993 829ZM841 785 836 785 834 790 835 792 841 792 842 791ZM1066 788 1062 791 1061 799 1070 804 1074 802 1072 791ZM1082 803 1082 804 1086 805 1095 797 1094 790 1089 788 1084 788ZM805 788 812 784 813 782 805 778 805 778 802 784ZM1018 831 1017 829 1010 828 1007 830 1006 835 1012 839 1019 842ZM926 778 930 781 934 779 935 772 934 771 928 773ZM770 753 781 754 782 747 780 744 774 744 769 750ZM763 747 758 750 757 756 768 758 770 753 769 750ZM655 566 655 575 658 577 667 572 667 571 660 560ZM805 778 808 774 806 769 801 769 800 775 805 778ZM944 763 943 771 949 772 953 768 946 762 945 762ZM680 602 674 606 674 609 678 614 688 612 689 608 684 602ZM879 665 884 668 885 661 880 661 879 662ZM878 658 884 652 883 651 879 650 875 653 876 657ZM902 771 895 775 894 775 903 781 905 780 905 775ZM832 689 828 693 829 695 834 698 834 698 835 696 832 690ZM895 775 902 771 902 768 899 765 892 766ZM871 819 866 813 866 812 862 815 863 823 868 825ZM904 716 910 714 909 706 901 712ZM915 829 917 837 918 837 923 834 923 829 920 826ZM844 812 841 807 841 807 834 811 838 812 843 814ZM942 749 942 740 940 738 936 738 934 745ZM807 713 811 706 810 705 804 708 804 712ZM921 824 920 826 923 829 931 829 931 823 926 821ZM1174 680 1172 675 1165 674 1164 682 1169 688ZM611 438 610 421 596 421 594 436 607 440ZM932 745 930 749 936 754 940 752 942 749 942 749 934 745ZM613 510 626 505 627 505 618 491 614 490 606 497 606 504ZM896 718 887 720 887 721 887 723 894 728 894 728 898 721ZM1070 840 1064 846 1063 853 1071 857 1074 846 1075 844ZM781 723 779 717 773 715 764 723 770 732 776 731ZM661 602 670 602 670 593 663 591 658 597ZM870 638 865 635 860 638 860 638 864 646 867 645ZM660 557 649 555 647 559 648 565 655 566 660 560 661 558ZM818 761 818 765 824 767 828 764 826 758 825 758ZM1175 670 1172 675 1174 680 1178 680 1183 674 1179 668ZM946 788 948 789 952 788 955 779 955 779 952 778 946 781ZM950 752 950 758 954 759 960 757 961 753 954 750ZM847 649 842 653 842 655 849 657 849 657 849 651ZM1029 796 1034 803 1041 803 1044 798 1038 791 1031 794ZM964 762 960 757 954 759 957 768 961 768 963 766ZM907 759 904 767 912 769 913 766 909 759 909 758ZM565 378 568 376 560 360 550 360 547 376 549 378ZM860 702 858 703 857 705 861 709 863 709 865 707 864 703ZM679 562 678 551 672 551 667 557 676 564ZM1171 659 1164 657 1160 660 1165 668 1169 666ZM978 824 981 824 985 818 984 816 974 816ZM967 785 965 790 969 793 974 791 970 784 968 784ZM877 633 872 638 876 643 884 641 882 634ZM547 408 557 405 558 398 548 390 538 394 538 399ZM856 814 855 812 851 810 844 812 843 814 853 818ZM689 608 694 606 696 596 694 594 691 594 684 602ZM583 378 593 378 600 355 600 355 581 356 578 375ZM887 723 885 733 890 735 891 735 894 728ZM836 785 832 782 830 782 827 786 827 788 834 790ZM810 663 811 662 812 660 810 657 805 657 803 661 809 663ZM817 726 821 729 824 726 823 721 820 719 817 723ZM813 782 812 784 816 790 818 789 822 784 820 780 815 780ZM985 810 977 807 976 808 973 816 973 816 974 816 984 816 986 812ZM804 712 804 708 799 705 796 707 797 713 801 714ZM803 737 802 737 797 737 794 743 798 748 801 749 804 747ZM840 778 844 776 845 771 841 768 838 769 837 776ZM1201 664 1202 669 1210 669 1210 668 1210 660 1206 659ZM914 838 909 835 904 839 904 839 912 842ZM875 811 866 813 871 819 876 819 878 816ZM993 777 991 778 990 784 994 786 999 783 994 777ZM1207 650 1209 648 1206 640 1201 642 1200 647ZM1173 658 1180 666 1182 665 1183 656 1175 654ZM994 815 994 819 997 822 1000 822 1004 818 1000 814ZM938 789 938 789 938 781 934 779 930 781 930 786ZM870 755 870 749 863 746 862 747 860 750 864 755 869 755ZM947 825 948 829 953 831 958 826 958 823 954 820 952 820ZM1103 812 1103 816 1108 823 1115 820 1117 815 1116 814 1112 808ZM870 713 872 714 876 714 877 710 875 708 869 708ZM905 780 903 781 901 785 902 788 908 789 911 788 911 786 909 782ZM913 819 913 819 906 818 904 819 909 828 909 828 910 828ZM920 698 920 698 925 704 925 705 929 700 925 694ZM1158 681 1164 682 1165 674 1163 671 1159 672 1157 675ZM802 753 801 749 798 748 792 753 791 756 797 758ZM1165 668 1163 671 1165 674 1172 675 1175 670 1169 666ZM847 783 841 784 841 785 842 791 848 791 849 791 850 786ZM963 766 961 768 964 775 967 776 973 773 973 769ZM962 807 958 813 964 817 968 814 966 808ZM642 571 646 577 655 575 655 566 648 565ZM926 816 926 821 931 823 934 821 934 819 930 814ZM840 658 845 661 849 660 849 659 849 657 842 655ZM1091 822 1091 822 1103 816 1103 812 1100 809 1090 809 1090 820ZM1067 825 1058 822 1057 823 1055 831 1058 834 1064 833ZM901 731 894 728 894 728 891 735 896 737ZM908 789 902 788 900 791 905 798 906 797ZM1058 822 1060 813 1054 809 1046 813 1048 820 1057 823ZM565 418 577 428 586 418 578 408 565 415ZM864 805 865 803 859 795 859 795 858 795 855 800 858 805ZM911 714 910 714 904 716 903 722 904 723 911 722ZM693 619 688 612 678 614 678 621 692 622 692 622ZM883 832 892 835 892 834 890 828 886 827ZM801 724 810 725 811 720 809 718 803 720ZM822 775 825 774 824 767 818 765 815 768 815 769ZM891 760 888 755 884 756 883 761 888 765 890 764ZM802 753 797 758 799 763 807 761 808 759 807 757ZM895 752 894 758 899 760 902 758 900 752 895 752ZM876 623 874 625 877 633 882 634 888 630 887 623ZM897 799 892 802 892 803 896 807 901 808 903 800ZM670 593 670 602 674 606 680 602 679 588 678 588ZM834 757 835 761 842 763 843 762 844 756 842 753ZM917 691 917 692 920 698 925 694 922 689ZM795 767 790 765 783 773 783 773 787 775 794 774ZM932 830 931 829 923 829 923 834 927 837ZM951 800 955 804 958 803 960 798 959 795 951 796ZM926 751 930 749 932 745 928 741 924 742 923 743ZM841 784 840 778 837 776 837 776 832 782 836 785 841 785ZM870 653 865 652 865 653 864 657 869 659 870 658ZM916 734 911 735 911 742 914 742 918 737ZM934 821 931 823 931 829 932 830 937 832 940 824ZM895 745 897 743 898 740 896 737 891 735 890 735 888 744ZM826 741 832 739 832 738 830 733 824 734 824 737ZM856 782 861 777 859 774 853 773 853 773 852 777ZM978 824 975 827 976 830 977 830 983 830 983 827 981 824ZM826 758 833 757 832 749 830 749 824 755 825 758ZM892 802 897 799 896 792 894 791 890 793 890 801ZM1002 783 999 783 994 786 996 793 997 793 1003 785ZM960 798 968 799 969 793 965 790 959 792 959 795ZM1173 658 1175 654 1174 650 1171 647 1164 651 1164 657 1171 659ZM797 737 802 737 804 733 800 725 799 725 793 733ZM892 766 899 765 899 760 894 758 891 760 890 764ZM883 713 887 714 890 709 890 707 882 706 881 709ZM811 728 817 726 817 723 813 720 811 720 810 725ZM1062 778 1066 783 1077 777 1067 769 1066 769ZM1178 680 1187 688 1188 675 1183 674ZM812 743 811 739 803 737 804 747 811 746ZM922 738 925 733 921 729 920 728 918 729 916 734 918 737ZM874 798 881 797 883 791 883 791 875 790 873 797ZM530 385 538 376 530 363 520 373ZM1205 656 1207 650 1200 647 1196 650 1197 655ZM878 762 878 762 869 764 868 765 875 771 879 767ZM993 829 997 822 994 819 989 821 989 826ZM863 681 859 683 864 688 867 684ZM967 829 962 829 961 835 968 833ZM667 571 667 572 672 578 680 574 675 565ZM886 669 884 668 878 672 878 673 881 677 886 674ZM900 752 904 748 897 743 895 745 895 752ZM808 774 805 778 813 782 815 780 812 774ZM1047 860 1041 858 1039 860 1043 866 1050 866ZM860 738 857 733 850 736 850 737 857 741ZM911 723 913 727 918 729 920 728 919 720 919 720ZM818 741 819 738 816 735 813 734 811 739 812 743ZM880 661 878 658 876 657 872 659 873 662 879 662ZM840 741 840 735 840 734 840 734 832 738 832 739 836 744ZM801 769 797 766 795 767 794 774 796 776 800 775ZM898 667 897 663 892 660 890 668 894 670ZM643 679 647 672 642 666 639 666 635 676 636 677Z"/>
<path fill="#a8d86a" d="M566 479 555 476 549 488 551 491 563 492 567 489ZM794 774 787 775 791 783 795 781 796 776ZM762 553 754 550 746 558 751 561 762 558ZM1221 633 1221 630 1216 624 1210 624 1208 634 1208 635 1215 637ZM643 532 650 544 651 544 659 535 658 527 657 526 644 526ZM798 796 799 796 807 800 807 791 806 790ZM874 625 866 627 865 628 865 635 870 638 872 638 877 633ZM748 605 746 608 748 615 753 619 759 616 760 608 750 604ZM550 360 560 360 572 347 571 339 563 334 554 334 551 335 543 353ZM663 670 666 674 675 671 676 663 673 661 665 664ZM1178 632 1180 628 1170 629 1171 635 1171 635ZM705 457 704 456 699 455 686 469 690 473 707 474ZM636 539 643 532 644 526 642 523 628 522 623 526 622 535 628 539ZM804 587 798 588 798 589 797 597 797 597 808 597 810 592ZM846 705 840 702 839 705 841 709 846 707ZM909 674 911 677 915 676 911 670ZM1057 746 1064 749 1068 742 1065 736 1060 736 1056 738ZM789 732 793 733 799 725 794 721 787 726ZM747 637 740 638 737 648 742 651 750 649 753 643ZM909 758 909 759 919 758 920 753 918 751 909 752ZM727 680 732 680 734 675 729 666 729 666 722 675ZM1153 685 1149 680 1140 683 1137 686 1136 690 1142 694 1153 690 1154 688ZM817 589 810 592 808 597 812 604 819 601 818 589ZM494 392 478 403 480 405 496 413 502 405 499 393ZM862 815 856 814 853 818 857 820 863 823ZM810 531 823 536 825 534 824 518 824 517 808 522 808 523ZM657 526 660 508 655 507 643 513 642 523 644 526ZM888 744 890 735 885 733 882 734 880 740 886 745ZM760 608 759 616 765 619 773 610 770 607 761 606ZM709 646 720 645 723 640 712 634 708 640ZM785 585 798 589 798 588 798 577 785 579ZM1153 690 1158 699 1170 692 1169 689 1154 688ZM806 538 810 531 808 523 791 527 791 529 793 537ZM831 592 842 593 843 592 843 581 838 580 829 586 828 587ZM821 543 809 547 808 547 810 555 822 555ZM818 589 819 601 825 603 829 600 831 592 828 587ZM640 548 647 548 650 544 643 532 636 539ZM773 596 783 601 786 595 784 587 777 589ZM519 406 518 407 517 421 525 426 530 424 535 415 528 407ZM764 562 772 564 775 562 774 553 766 549 762 553 762 558ZM642 523 643 513 635 502 627 505 626 505 628 522ZM1133 662 1134 661 1137 650 1136 649 1130 648 1128 658ZM1104 787 1107 788 1107 769 1114 769 1109 766 1099 777ZM1142 694 1144 702 1157 702 1158 699 1153 690ZM893 651 894 654 900 656 904 651 897 648 894 650ZM1211 648 1216 643 1215 637 1208 635 1206 640 1209 648ZM1222 645 1227 637 1221 633 1215 637 1216 643ZM1178 632 1183 640 1189 635 1186 627 1180 628 1180 628ZM812 676 814 678 819 678 819 672 819 672 814 673ZM1221 633 1227 637 1231 637 1234 635 1234 629 1227 625 1221 630ZM821 633 820 633 811 634 813 641 819 643ZM1046 752 1056 760 1063 754 1064 750 1064 749 1057 746 1047 750ZM1198 632 1208 634 1210 624 1198 624 1197 624ZM649 659 642 666 647 672 653 673 656 670 653 661 649 659ZM846 707 841 709 841 711 843 715 844 716 845 715 848 713 846 708ZM841 807 836 801 833 800 830 809 834 811ZM812 669 813 669 817 667 817 665 811 662 810 663ZM901 712 909 706 909 706 900 702 899 703 899 711ZM1170 692 1178 700 1191 697 1187 688 1178 680 1174 680 1169 688 1169 689ZM798 577 798 576 798 569 795 565 785 568 784 577 785 579ZM783 604 774 610 779 617 784 619 786 618 788 607ZM823 692 828 693 832 689 832 689 829 686 823 687 823 687ZM1228 660 1227 656 1217 656 1216 657 1220 666 1227 663ZM821 543 822 542 823 536 810 531 806 538 809 547ZM1089 788 1094 790 1104 787 1099 777 1093 776ZM1157 702 1160 708 1171 713 1178 700 1170 692 1158 699ZM708 667 703 670 705 682 713 682 717 674 714 670ZM870 723 873 723 878 718 877 716 876 714 872 714ZM1151 640 1143 635 1139 637 1140 644 1147 645 1151 640ZM851 707 851 706 850 701 849 701 846 705 846 707 846 708ZM804 643 809 633 807 632 798 632 797 634 800 644ZM758 678 760 692 761 692 766 690 769 679 760 676ZM977 757 982 760 986 758 987 756 985 749 977 751 976 753ZM661 707 656 696 656 696 650 701 656 710 658 712ZM1175 654 1183 656 1186 654 1186 653 1181 647 1174 650ZM911 677 909 674 903 673 901 676 903 680 910 682ZM1186 654 1193 660 1195 659 1197 655 1196 650 1192 647 1191 647 1186 653ZM752 543 754 550 762 553 766 549 767 543 760 536 757 536ZM851 721 852 721 854 717 854 716 849 713 848 713 845 715ZM1047 750 1057 746 1056 738 1047 742 1045 742ZM848 740 851 747 857 742 857 741 850 737 849 738ZM1143 663 1142 672 1142 672 1148 673 1152 664ZM874 565 875 566 883 565 885 556 878 554 874 556ZM865 803 864 805 866 807 874 804 874 798 873 797 871 797ZM816 704 819 703 822 699 815 697 815 697ZM787 726 794 721 793 717 786 713 784 713 779 717 781 723ZM542 308 541 304 529 296 518 300 518 312 529 318ZM781 563 775 562 772 564 771 574 773 576 784 577 785 568ZM1216 654 1223 647 1222 645 1216 643 1211 648ZM1145 654 1137 650 1134 661 1142 662ZM1142 672 1135 671 1131 675 1137 686 1140 683 1142 672ZM808 649 804 653 805 657 810 657 811 653ZM1183 640 1191 647 1192 647 1195 638 1194 636 1189 635 1183 640ZM764 768 764 768 772 772 778 769 778 764 769 760ZM801 665 802 662 796 657 794 658 792 662 796 667ZM829 645 834 643 835 640 830 633 827 634 826 643ZM774 639 778 632 771 625 768 624 762 632 763 636 772 639ZM871 702 874 701 875 697 873 695 870 694 867 699 867 699ZM864 688 863 691 868 692 871 688 868 684 867 684ZM884 801 881 806 884 810 887 810 892 803 892 802 890 801ZM872 638 870 638 867 645 871 648 876 645 876 643ZM783 773 783 773 778 769 772 772 770 778 779 785 780 785ZM875 566 875 573 882 577 883 576 886 568 883 565ZM747 586 744 580 735 578 732 587 737 594 746 588ZM951 742 947 750 950 752 954 750 956 745ZM1170 629 1159 630 1164 636 1171 635ZM1189 635 1194 636 1198 632 1197 624 1186 627ZM760 569 763 574 771 574 772 564 764 562ZM1130 648 1136 649 1140 644 1139 637 1136 638 1129 647ZM1150 676 1149 680 1153 685 1158 681 1157 675ZM827 566 834 561 834 560 828 555 822 555 821 564ZM508 381 494 373 488 382 494 392 499 393 508 386ZM1232 650 1232 649 1231 637 1227 637 1222 645 1223 647 1230 651ZM1171 646 1163 641 1158 645 1158 647 1164 651 1171 647ZM770 607 773 610 774 610 783 604 783 601 773 596 772 597ZM815 695 816 693 816 690 815 688 809 689 810 692ZM1127 666 1133 662 1133 662 1128 658 1124 657 1123 663 1123 666ZM826 792 823 793 820 799 822 801 830 798ZM794 508 788 517 791 527 808 523 808 522 803 510 794 508ZM885 556 883 565 886 568 889 568 889 554ZM1157 660 1156 650 1148 651 1147 653 1154 661ZM751 561 753 570 760 569 764 562 762 558ZM875 668 876 670 878 672 884 668 884 668 879 665ZM865 671 857 672 857 676 864 678 865 677ZM793 671 785 670 783 674 784 680 789 680 794 677ZM814 673 819 672 819 669 817 667 813 669ZM703 737 699 727 695 727 689 731 698 736 702 739ZM911 701 913 693 908 689 905 690 903 695ZM827 634 830 633 832 631 826 622 823 621 820 624 820 633 821 633ZM565 501 563 492 551 491 557 501 561 505ZM822 699 822 699 823 693 816 693 815 695 815 697ZM821 564 822 555 822 555 810 555 809 557 809 559 818 566ZM791 783 791 783 787 775 783 773 780 785 783 787ZM1169 689 1169 688 1164 682 1158 681 1153 685 1154 688ZM806 696 805 696 802 702 809 704 810 699ZM1221 630 1227 625 1227 624 1224 624 1216 624ZM1181 647 1186 653 1191 647 1183 640 1183 640ZM880 582 887 588 888 588 888 578 883 576 882 577ZM746 674 742 672 734 675 732 680 737 686 747 677ZM793 671 794 677 799 679 802 674 795 669ZM870 741 872 738 871 734 865 735 864 738 865 742ZM965 790 967 785 960 783 958 791 959 792ZM746 558 754 550 752 543 743 544 741 551 745 558ZM815 792 815 798 820 799 823 793 818 789 816 790ZM1142 672 1140 683 1149 680 1150 676 1148 673ZM875 573 871 575 871 583 875 585 880 582 882 577ZM860 723 857 726 859 729 862 730 869 726 870 723 866 721ZM784 587 786 595 797 597 798 589 785 585ZM884 722 878 727 878 731 882 734 885 733 887 723 887 721ZM727 712 720 712 716 717 717 721 721 723 731 719ZM762 660 771 665 771 664 771 652 769 650 764 651 762 653ZM911 677 910 682 910 683 915 684 919 682 915 676ZM842 653 837 649 836 649 835 654 836 657 840 658 840 658 842 655ZM1128 658 1130 648 1129 647 1127 649 1124 657ZM1183 640 1183 640 1178 632 1171 635 1174 641 1183 640ZM828 726 831 730 833 729 836 725 831 720ZM892 834 892 835 896 837 904 839 904 839 899 833ZM772 772 764 768 762 772 770 778ZM703 716 709 713 708 705 702 703 696 711ZM1008 818 1004 818 1000 822 1004 828 1007 830 1010 828ZM911 701 912 702 920 698 920 698 917 692 913 693ZM857 655 858 656 863 658 864 657 865 653 859 653ZM875 697 882 695 882 695 876 690 873 695ZM889 677 889 683 894 683 897 676 895 674ZM940 797 938 801 940 805 945 806 946 801 943 797ZM868 678 871 675 871 673 866 670 865 670 865 671 865 677ZM1230 651 1223 647 1216 654 1217 656 1227 656ZM750 715 758 717 760 709 757 704 752 704 749 710ZM886 568 883 576 888 578 889 574 889 568ZM796 688 797 694 803 694 804 688ZM753 570 752 571 755 583 759 583 763 574 760 569ZM820 614 814 613 809 621 820 624 823 621ZM1152 664 1154 661 1147 653 1145 654 1142 662 1143 663 1152 664ZM833 729 840 734 840 734 842 729 838 725 836 725ZM809 704 802 702 800 703 799 705 804 708 810 705ZM800 644 797 634 791 641 798 645ZM883 761 878 762 879 767 884 770 888 765ZM1155 631 1153 631 1143 635 1151 640ZM838 663 834 663 833 664 834 669 840 666ZM793 697 787 692 780 699 782 701 791 703Z"/>
<path fill="#3568b5" d="M786 554 781 563 785 568 795 565 796 559 792 552ZM766 549 774 553 780 549 780 543 777 540 767 543ZM793 537 791 529 778 532 777 540 780 543 792 541ZM791 527 788 517 775 515 770 524 778 532 791 529ZM780 543 780 549 786 554 792 552 794 549 792 541ZM780 549 774 553 775 562 781 563 786 554ZM794 549 808 547 809 547 806 538 793 537 792 541Z"/>
<path fill="#5585b0" d="M518 300 529 296 530 281 517 282 511 293ZM455 267 441 262 438 265 436 275 451 282 454 280ZM434 231 442 247 444 247 446 247 456 235 456 231 449 231 436 227ZM533 279 537 278 547 264 547 262 529 255 521 261 521 262ZM461 261 460 257 446 247 444 247 441 262 455 267ZM494 306 497 305 505 294 499 287 484 286 480 294 483 300ZM451 282 436 275 429 280 435 295 443 295ZM473 336 485 324 472 315 468 315 463 332ZM402 252 395 257 399 268 400 274 404 274 407 269 408 254ZM425 261 426 260 429 250 424 244 414 246 411 252ZM496 353 503 360 509 361 513 355 513 349 505 341 496 345ZM510 316 497 305 494 306 488 324 490 326 506 327ZM466 293 462 284 454 280 451 282 443 295 447 300 462 300ZM508 240 529 246 530 244 527 233 509 233ZM541 304 548 289 537 278 533 279 530 281 529 296ZM508 330 525 334 529 329 529 318 518 312 510 316 506 327ZM397 243 400 235 397 230 382 231 378 235 392 243 392 244ZM415 324 409 334 419 335 417 325ZM390 346 398 349 391 338ZM468 315 472 315 483 300 480 294 466 293 462 300 464 312ZM501 261 502 272 502 273 512 274 521 262 521 261 507 254ZM517 282 530 281 533 279 521 262 512 274ZM436 227 414 220 416 229 428 234 434 231ZM400 220 397 230 400 235 410 236 416 229 414 220 412 219 405 216ZM372 213 382 216 383 215 386 208 374 202 369 200ZM382 216 372 213 367 217 367 230 374 233 378 235 382 231ZM514 373 509 361 503 360 493 371 494 373 508 381ZM511 293 517 282 512 274 502 273 499 287 505 294ZM493 371 503 360 496 353 484 358 484 364ZM474 273 483 277 486 273 487 258 487 258 478 256 469 263ZM476 243 489 240 489 233 474 233 474 233ZM462 284 474 273 469 263 461 261 455 267 454 280ZM414 291 415 285 404 274 400 274 402 290 404 293ZM383 215 382 216 382 231 397 230 400 220ZM426 279 421 268 407 269 404 274 415 285ZM442 247 434 231 428 234 424 244 429 250ZM414 246 410 236 400 235 397 243 402 252 408 254 411 252ZM508 240 509 233 489 233 489 240 493 244 506 244ZM480 294 484 286 483 277 474 273 462 284 466 293ZM426 260 425 261 421 268 426 279 429 280 436 275 438 265ZM518 312 518 300 511 293 505 294 497 305 510 316ZM496 345 505 341 508 330 506 327 490 326 491 341ZM460 257 465 245 456 235 446 247ZM464 312 462 300 447 300 446 314 449 316ZM494 306 483 300 472 315 485 324 488 324ZM383 215 400 220 405 216 386 208ZM435 295 429 280 426 279 415 285 414 291 416 295 431 299ZM486 273 502 272 501 261 487 258ZM507 254 521 261 529 255 529 246 508 240 506 244ZM513 349 525 339 525 334 508 330 505 341ZM490 326 488 324 485 324 473 336 477 346 491 341ZM478 256 475 244 465 245 460 257 461 261 469 263ZM493 244 489 240 476 243 475 244 478 256 487 258ZM477 346 476 348 484 358 496 353 496 345 491 341ZM444 247 442 247 429 250 426 260 438 265 441 262ZM484 286 499 287 502 273 502 272 486 273 483 277ZM416 295 414 291 404 293 412 309 412 309ZM397 243 392 244 392 250 395 257 402 252ZM408 254 407 269 421 268 425 261 411 252ZM428 234 416 229 410 236 414 246 424 244Z"/>
<path fill="#3244a0" d="M769 348 778 361 791 363 791 345 785 340 770 344ZM619 272 605 277 605 278 614 293 627 294 632 279ZM737 330 720 334 716 339 716 344 731 361 732 361 743 348 743 338ZM703 356 716 344 716 339 696 333 690 335 686 344 689 351ZM629 382 627 384 624 400 637 412 645 409 648 399 634 382ZM686 344 668 341 657 357 678 370 689 351ZM627 384 612 381 603 385 600 400 613 406 624 400ZM605 278 591 283 590 302 607 307 614 293ZM743 455 742 469 746 475 759 474 767 457 762 449ZM787 325 789 324 782 314 768 300 764 317 767 323ZM549 237 556 243 573 228 571 216 549 216 549 233 548 233ZM547 264 537 278 548 289 558 287 560 273ZM753 377 732 361 731 361 729 363 727 388 727 389 740 392ZM613 223 596 226 591 235 609 247 615 246ZM764 333 767 323 764 317 740 319 737 330 743 338ZM687 379 703 380 708 369 703 356 689 351 678 370 679 372ZM546 310 568 306 565 293 558 287 548 289 541 304 542 308ZM754 498 768 491 769 489 764 478 759 474 746 475 742 490 743 492ZM543 353 551 335 529 329 525 334 525 339 535 354ZM570 308 568 306 546 310 554 334 563 334ZM737 312 725 305 725 305 716 323 720 334 737 330 740 319ZM700 404 704 402 704 381 703 380 687 379 682 402ZM675 405 659 418 676 431 683 430 686 426 678 405ZM576 267 584 280 591 283 605 278 605 277 601 259 579 256 578 257ZM707 474 721 474 726 469 720 457 705 457 707 474ZM648 399 645 409 658 419 659 418 675 405 661 392ZM719 432 717 424 701 420 692 426 699 437 712 439 717 436ZM794 371 793 364 791 363 778 361 762 377 763 379 788 386ZM626 357 624 355 609 358 612 381 627 384 629 382ZM737 312 740 319 764 317 768 300 768 300 751 298ZM737 413 722 413 717 424 719 432 742 431 745 428ZM556 243 549 237 530 244 529 246 529 255 547 262 556 246ZM640 431 653 433 658 419 645 409 637 412 633 421ZM732 361 753 377 758 376 757 354 743 348ZM776 423 778 404 765 399 757 405 759 419 776 423ZM547 262 547 264 560 273 576 267 578 257 556 246ZM791 363 793 364 807 357 800 342 791 345ZM618 247 625 255 639 257 644 253 636 242 629 236ZM758 376 762 377 778 361 769 348 757 354ZM668 341 663 331 643 329 641 333 654 357 657 357ZM737 312 751 298 739 296 725 305ZM664 310 669 321 681 321 684 315 682 314 670 298ZM572 347 581 356 600 355 600 332 590 329 571 339ZM770 344 785 340 787 325 767 323 764 333ZM625 255 618 247 615 246 609 247 601 259 605 277 619 272ZM551 335 554 334 546 310 542 308 529 318 529 329ZM802 397 811 393 816 378 794 371 788 386 790 395 791 396ZM590 302 591 283 584 280 565 293 568 306 570 308 583 309ZM650 291 643 300 649 312 664 310 670 298 667 295 665 290ZM737 413 743 400 740 392 727 389 718 405 722 413ZM530 244 549 237 548 233 527 233ZM600 332 609 327 612 318 607 307 590 302 583 309 590 329ZM763 443 775 434 776 423 759 419 748 428ZM591 235 596 226 592 216 571 216 573 228 587 237ZM590 329 583 309 570 308 563 334 571 339ZM704 381 727 388 729 363 708 369 703 380ZM627 294 632 300 643 300 650 291 641 276 641 276 632 279ZM637 412 624 400 613 406 613 419 627 423 633 421ZM579 256 601 259 609 247 591 235 587 237ZM743 400 757 405 765 399 763 379 762 377 758 376 753 377 740 392ZM686 426 692 426 701 420 700 404 682 402 678 405ZM648 399 661 392 662 385 648 374 634 382ZM682 402 687 379 679 372 662 385 661 392 675 405 678 405ZM690 335 681 321 669 321 663 331 668 341 686 344ZM746 475 742 469 726 469 721 474 724 492 742 490ZM759 419 757 405 743 400 737 413 745 428 748 428ZM727 389 727 388 704 381 704 402 718 405ZM578 257 579 256 587 237 573 228 556 243 556 246ZM681 321 690 335 696 333 700 323 684 315ZM706 481 714 493 722 494 724 492 721 474 707 474ZM641 276 639 257 625 255 619 272 632 279ZM576 267 560 273 558 287 565 293 584 280ZM781 440 775 434 763 443 762 449 767 457 777 458 781 455ZM613 223 615 246 618 247 629 236 614 223 613 222ZM662 385 679 372 678 370 657 357 654 357 652 359 648 374ZM767 457 759 474 764 478 781 472 777 458ZM701 420 717 424 722 413 718 405 704 402 700 404ZM641 276 650 291 665 290 656 271ZM745 428 742 431 739 449 743 455 762 449 763 443 748 428ZM788 386 763 379 765 399 778 404 790 395ZM696 333 716 339 720 334 716 323 713 329 701 324 700 323ZM731 361 716 344 703 356 708 369 729 363ZM791 345 800 342 797 336 789 324 787 325 785 340ZM643 329 663 331 669 321 664 310 649 312 643 325ZM793 364 794 371 816 378 819 376 809 362 807 357ZM654 357 641 333 626 340 624 355 626 357 652 359ZM596 226 613 223 613 222 612 221 606 216 592 216Z"/>
<path fill="#3f72b0" d="M324 295 324 314 340 321 348 332 361 304 352 300 347 290ZM390 346 366 364 376 388 398 396 411 387 405 380 402 371 401 353 398 349ZM366 364 390 346 391 338 390 337 376 321 363 306 361 304 348 332 352 337 360 353 357 361ZM347 290 343 280 342 258 339 253 324 252 324 295ZM342 187 336 185 324 180 324 210 329 210 340 197ZM339 253 334 240 336 220 343 222 329 210 324 210 324 252Z"/>
<path fill="#66bf6a" d="M908 689 913 693 917 692 917 691 915 684 910 683ZM871 652 871 648 867 645 864 646 864 647 865 652 870 653ZM976 745 977 751 985 749 987 746 982 742ZM849 730 850 736 857 733 859 729 857 726 855 726ZM800 617 809 621 809 621 814 613 811 606 800 609ZM890 707 890 709 897 712 899 711 899 703 896 702 890 706ZM474 372 481 382 488 382 494 373 493 371 484 364 474 371ZM679 676 675 671 666 674 665 682 675 683ZM804 688 803 694 805 696 806 696 810 692 809 689 808 688 804 687ZM684 528 682 517 673 518 667 526 677 535 677 535 681 533ZM877 610 876 607 863 605 865 616 875 615ZM793 697 791 703 793 706 796 707 799 705 800 703 796 696ZM902 808 901 808 896 807 893 813 900 817ZM563 492 565 501 573 504 580 497 578 492 567 489ZM744 755 735 750 731 752 729 757 743 764ZM467 378 471 381 473 394 481 382 474 372ZM465 364 467 353 456 348 451 349 446 361 449 364 454 368ZM761 606 770 607 772 597 763 593 761 595ZM860 648 864 647 864 646 860 638 855 645 855 646ZM953 831 948 829 943 835 947 840 955 837ZM721 661 721 656 712 656 707 662 708 667 714 670ZM809 647 810 647 813 641 811 634 809 633 804 643ZM686 675 686 676 694 678 701 670 693 665 687 669ZM884 825 886 827 890 828 895 824 889 818 886 819ZM829 586 825 576 820 575 816 584 817 589 818 589 828 587ZM883 791 884 784 875 783 873 787 875 790ZM484 364 484 358 476 348 467 353 465 364 474 371ZM809 621 809 621 807 632 809 633 811 634 820 633 820 624ZM804 682 804 687 808 688 810 684 808 680 808 680ZM717 721 716 717 709 713 703 716 703 724 712 726ZM664 507 673 518 682 517 683 516 684 506 667 502ZM847 669 843 668 839 673 842 675 845 676 848 672ZM799 680 795 687 796 688 804 688 804 687 804 682ZM765 619 759 616 753 619 752 626 752 628 762 632 768 624ZM607 536 600 541 605 547 609 551 616 546 617 538ZM997 793 1000 797 1006 797 1010 788 1003 785ZM764 768 764 768 756 763 750 767 760 771 762 772ZM925 733 922 738 924 742 928 741 931 735 930 733ZM871 583 866 586 869 595 877 596 875 585ZM876 607 879 599 878 596 877 596 869 595 862 600 863 604 863 605ZM958 823 963 821 964 817 958 813 955 814 954 820ZM869 659 864 657 863 658 863 663 867 663ZM857 676 856 677 858 683 859 683 863 681 864 678ZM712 726 703 724 699 727 703 737 713 733ZM875 783 873 777 867 777 865 778 866 785 868 787 873 787ZM778 632 782 630 784 619 779 617 771 625ZM878 673 874 677 874 681 875 681 879 681 881 679 881 677ZM555 476 553 472 539 472 537 478 547 484 549 488ZM884 801 890 801 890 793 883 791 881 797ZM819 643 813 641 810 647 816 648 820 644ZM465 364 454 368 462 375 467 378 474 372 474 371ZM574 514 573 504 565 501 561 505 573 515ZM496 413 497 413 509 425 517 421 518 407 502 405ZM715 746 723 744 727 735 727 735 714 733ZM887 588 878 596 879 599 888 601 887 598 888 588ZM869 707 869 708 875 708 876 703 874 701 871 702ZM859 795 865 803 871 797 866 794ZM844 692 839 690 839 690 838 694 841 696 844 693ZM809 765 807 761 799 763 797 766 801 769 806 769ZM729 666 729 666 734 662 732 653 722 654 721 656 721 661ZM622 553 616 546 609 551 616 558ZM735 727 735 727 745 723 745 720 738 714 732 720ZM869 707 865 707 863 709 865 715 870 713 869 708ZM962 829 958 826 953 831 955 837 960 835 961 835ZM795 791 791 783 783 787 795 794ZM473 394 474 400 478 403 494 392 488 382 481 382ZM795 791 795 794 798 796 806 790 805 788 802 784 801 784ZM815 697 815 697 815 695 810 692 806 696 810 699ZM836 713 834 717 839 718 843 715 841 711ZM779 617 774 610 773 610 765 619 768 624 771 625ZM853 677 850 680 851 683 856 685 858 683 856 677ZM853 773 859 774 861 769 856 766 855 766ZM918 776 921 780 926 778 928 773 924 768 921 769ZM682 699 689 701 693 697 689 689 685 688 683 689ZM865 616 864 617 866 627 874 625 876 623 875 615ZM823 693 823 692 823 687 821 687 816 690 816 693ZM993 763 998 758 993 754 987 756 986 758ZM717 721 712 726 713 733 714 733 727 735 727 734 721 723ZM751 662 743 660 739 663 742 672 746 674 753 664ZM771 652 771 664 782 661 782 654 780 652ZM909 752 918 751 917 746 914 742 911 742 908 743 907 748ZM840 701 834 698 834 698 831 703 835 706 839 705 840 702ZM884 668 886 669 890 668 892 660 892 660 886 659 885 661 884 668ZM689 689 697 685 694 678 686 676 685 688ZM830 654 835 654 836 649 830 650ZM854 698 861 694 862 692 855 689 852 691 852 691ZM587 500 580 497 573 504 574 514 584 513 589 506ZM823 721 827 718 824 714 823 714 820 717 820 719ZM816 572 820 575 825 576 828 573 827 566 821 564 818 566ZM831 703 827 702 824 706 828 710 829 710ZM1018 831 1028 829 1030 823 1023 816 1020 817 1017 829ZM667 526 673 518 664 507 660 508 657 526 658 527ZM677 535 667 526 658 527 659 535 666 542ZM772 597 773 596 777 589 770 584 763 587 763 593ZM568 478 566 479 567 489 578 492 583 481 582 478ZM821 661 822 659 821 655 816 657 815 659 819 662ZM676 663 675 671 679 676 686 675 687 669 679 662ZM758 750 753 743 748 743 747 753 757 756 757 756ZM797 694 796 696 800 703 802 702 805 696 803 694ZM539 472 537 468 530 465 523 470 528 472 537 478ZM876 657 875 653 871 652 870 653 870 658 872 659ZM991 769 985 769 982 775 983 776 991 778 993 777ZM801 714 797 713 793 717 794 721 799 725 800 725 801 724 803 720ZM887 810 884 810 882 814 886 819 889 818 892 814ZM769 679 766 690 775 692 778 684 770 679ZM877 596 878 596 887 588 880 582 875 585ZM912 769 904 767 902 768 902 771 905 775 912 773ZM689 707 685 710 684 718 692 718 696 711ZM670 697 670 697 668 707 672 711 678 707 679 700ZM926 816 930 814 932 808 931 807 925 807 923 814ZM845 676 842 675 839 681 844 682 846 679ZM942 749 942 749 947 750 951 742 950 740 942 740ZM866 813 875 811 876 806 874 804 866 807 866 812ZM591 526 584 513 574 514 573 515 574 516 590 528ZM796 667 792 662 785 664 785 670 793 671 795 669ZM857 742 862 747 863 746 865 742 864 738 860 738 857 741ZM807 791 815 792 816 790 812 784 805 788 806 790ZM844 749 851 748 851 747 848 740 843 743ZM943 720 939 715 933 716 932 719 935 723 942 722ZM819 662 815 659 812 660 811 662 817 665Z"/>
<path fill="#3367b5" d="M842 434 843 445 847 448 857 441 845 432ZM880 520 890 506 879 498 869 509 872 516 878 520ZM856 498 864 488 863 480 853 476 845 479 844 490 851 497ZM872 516 869 509 861 506 852 518 852 519 862 524ZM867 465 859 459 854 460 853 476 863 480 867 477ZM880 520 878 520 877 529 882 536 889 534 890 523ZM849 536 845 530 840 529 833 534 837 544 848 539ZM862 556 864 565 865 566 874 565 874 556 865 554 863 555ZM861 536 849 536 848 539 849 548 859 548ZM878 460 890 458 892 454 880 451 874 449ZM890 458 894 469 899 471 899 469 905 452 896 455 892 454ZM860 578 861 584 866 586 871 583 871 575 866 574ZM823 410 821 414 830 426 839 420 834 408ZM816 378 811 393 820 400 832 392 831 389 821 379 819 376ZM845 479 853 476 854 460 848 457 839 461 839 476ZM867 477 863 480 864 488 878 493 884 486 881 477ZM841 509 851 497 844 490 830 494 829 498ZM864 565 855 569 856 574 860 578 866 574 865 566ZM852 518 841 511 834 518 840 529 845 530 852 519ZM855 569 850 564 845 569 845 580 846 580 856 574ZM878 493 864 488 856 498 861 506 869 509 879 498ZM845 580 843 581 843 592 855 594 857 587 846 580ZM884 486 878 493 879 498 890 506 892 506 893 493 894 487ZM847 448 848 457 854 460 859 459 867 446 861 444 857 441ZM857 587 855 594 855 595 862 600 869 595 866 586 861 584ZM859 548 849 548 846 555 850 560 862 556 863 555ZM881 542 876 544 878 554 885 556 889 554 889 551 889 548ZM865 554 871 543 865 536 862 535 861 536 859 548 863 555ZM861 536 862 535 862 524 852 519 845 530 849 536ZM841 509 841 511 852 518 861 506 856 498 851 497ZM876 544 881 542 882 536 877 529 865 536 871 543ZM822 506 824 517 824 518 834 518 841 511 841 509 829 498ZM865 536 877 529 878 520 872 516 862 524 862 535ZM890 506 880 520 890 523 890 522 892 506ZM820 400 823 410 834 408 834 407 832 392ZM848 539 837 544 836 545 842 554 846 555 849 548ZM894 469 882 474 881 477 884 486 894 487 899 471ZM866 574 871 575 875 573 875 566 874 565 865 566ZM833 534 840 529 834 518 824 518 825 534ZM845 432 843 430 839 420 830 426 830 430 842 434ZM831 547 828 555 834 560 842 554 836 545ZM850 560 850 564 855 569 864 565 862 556ZM894 469 890 458 878 460 877 462 882 474ZM874 556 878 554 876 544 871 543 865 554ZM855 594 843 592 842 593 842 601 848 606 855 595ZM882 536 881 542 889 548 889 534ZM846 580 857 587 861 584 860 578 856 574Z"/>
<path fill="#98bcbe" d="M726 531 709 536 709 537 710 544 719 545 728 536ZM829 671 827 671 825 674 825 676 827 679 829 680 834 674 834 673 833 672ZM695 727 692 718 684 718 681 720 680 726 689 731ZM834 710 835 706 831 703 831 703 829 710ZM738 619 748 615 746 608 736 609 735 614ZM726 623 737 624 738 619 735 614 723 615ZM720 598 722 600 737 594 737 594 732 587 724 587 719 590ZM746 558 745 558 742 560 742 570 746 573 752 571 753 570 751 561ZM784 680 782 683 787 691 794 686 789 680ZM693 557 697 560 707 561 710 555 708 549 700 549ZM747 528 740 540 743 544 752 543 757 536ZM816 657 814 654 811 653 810 657 812 660 815 659ZM817 650 816 648 810 647 809 647 808 649 811 653 814 654ZM703 629 712 631 715 627 714 623 707 618 702 624ZM788 517 794 508 783 502 773 508 773 508 775 515ZM710 588 700 582 695 586 694 594 696 596 704 597ZM858 664 856 661 849 659 849 660 850 665 856 666ZM796 606 788 607 786 618 795 621 800 617 800 609ZM851 706 857 706 857 705 858 703 854 698 850 701ZM722 614 713 610 707 617 707 618 714 623 723 615ZM700 574 708 571 709 567 707 561 697 560 695 572ZM698 535 709 537 709 536 708 523 701 518 695 529ZM731 563 742 560 745 558 741 551 731 551 730 562ZM869 764 878 762 876 756 870 755 869 755ZM692 556 693 557 700 549 694 541 692 541 686 549ZM730 512 738 510 743 492 742 490 724 492 722 494 722 497ZM748 518 738 510 730 512 724 520 727 526 746 525ZM910 805 905 798 903 800 901 808 902 808 908 810 909 809ZM757 507 773 508 773 508 768 491 754 498ZM720 519 714 508 703 508 701 517 701 518 708 523ZM837 648 845 644 842 639 835 640 834 643ZM735 614 736 609 734 606 725 605 722 614 723 615 723 615ZM760 536 768 524 754 515 748 518 746 525 747 528 757 536ZM737 594 737 594 738 595 748 605 750 604 753 596 746 588ZM823 721 824 726 828 726 831 720 831 719 827 718ZM726 623 724 629 727 635 736 633 738 626 737 624ZM680 574 681 574 688 570 685 562 679 562 676 564 675 565ZM696 596 694 606 700 610 707 602 704 597ZM841 696 842 699 847 699 847 694 844 693ZM935 809 932 808 930 814 934 819 939 814ZM707 602 712 604 720 598 719 590 712 587 710 588 704 597ZM856 685 855 689 862 692 863 691 864 688 859 683 858 683ZM686 549 692 541 681 533 677 535 680 548ZM849 651 849 657 857 655 854 650ZM679 562 685 562 692 556 686 549 680 548 678 551ZM754 515 757 507 754 498 743 492 738 510 748 518ZM861 694 854 698 854 698 858 703 860 702 862 695ZM865 670 862 664 858 664 856 666 856 670 857 672 865 671ZM755 583 752 571 746 573 744 580 747 586ZM683 689 685 688 686 676 686 675 679 676 675 683 678 688ZM900 752 902 758 907 759 909 758 909 752 907 748 904 748ZM727 526 726 531 728 536 731 539 740 540 747 528 746 525ZM915 829 920 826 921 824 918 820 913 819 910 828ZM824 651 829 649 829 645 826 643 822 645ZM865 715 863 709 861 709 859 712 860 716 865 716ZM770 524 775 515 773 508 757 507 754 515 768 524ZM789 651 798 647 798 645 791 641 788 642ZM836 725 838 725 839 722 839 718 834 717 833 717 831 719 831 720ZM719 590 724 587 723 576 722 575 713 576 712 587ZM744 739 751 729 745 723 735 727ZM720 519 708 523 709 536 726 531 727 526 724 520ZM828 664 827 659 822 659 821 661 824 665ZM801 665 796 667 795 669 802 674 802 674 805 671 805 670ZM684 582 689 581 693 572 688 570 681 574ZM700 549 708 549 710 544 709 537 698 535 694 541ZM680 588 691 594 694 594 695 586 689 581 684 582ZM692 541 694 541 698 535 695 529 684 528 681 533ZM847 694 852 691 852 691 850 689 845 689 844 692 844 693ZM723 615 714 623 715 627 724 629 726 623 723 615ZM741 551 743 544 740 540 731 539 730 550 731 551ZM864 678 863 681 867 684 868 684 870 682 868 678 865 677ZM795 687 794 686 787 691 787 692 793 697 796 696 797 694 796 688ZM734 606 738 595 737 594 722 600 725 605ZM805 671 806 671 812 669 810 663 809 663 805 670ZM848 713 849 713 852 710 851 707 846 708ZM822 707 819 703 816 704 814 706 819 710 820 710ZM839 690 832 690 835 696 838 694ZM858 656 856 661 858 664 862 664 863 663 863 658ZM844 682 839 681 838 681 837 683 837 684 840 687 844 686 845 684ZM828 711 828 710 824 706 822 707 820 710 823 714 824 714ZM734 573 733 575 735 578 744 580 746 573 742 570ZM733 575 723 576 724 587 732 587 735 578ZM767 543 777 540 778 532 770 524 768 524 760 536ZM700 610 701 612 707 617 713 610 712 604 707 602ZM802 674 808 680 808 680 811 676 806 671 805 671ZM836 649 837 649 837 648 834 643 829 645 829 649 830 650ZM846 679 844 682 845 684 849 685 851 683 850 680ZM880 686 879 681 875 681 875 688 876 689ZM695 586 700 582 700 574 695 572 693 572 689 581ZM854 717 859 717 860 716 859 712 855 711 855 711 854 716ZM929 759 927 763 934 768 937 763 934 758ZM951 796 959 795 959 792 958 791 952 788 948 789 948 792ZM734 573 742 570 742 560 731 563ZM821 653 824 652 824 651 822 645 820 644 816 648 817 650ZM886 746 890 752 895 752 895 752 895 745 888 744 886 745ZM763 587 770 584 773 576 771 574 763 574 759 583ZM642 689 650 701 656 696 656 696 645 688ZM746 608 748 605 738 595 734 606 736 609ZM856 670 849 672 853 677 856 677 857 676 857 672ZM809 704 810 705 811 706 812 706 814 706 816 704 815 697 810 699ZM700 582 710 588 712 587 713 576 708 571 700 574ZM845 689 844 686 840 687 839 690 844 692ZM855 711 859 712 861 709 857 705 857 706ZM839 705 835 706 834 710 836 713 841 711 841 709ZM834 717 836 713 834 710 829 710 828 710 828 711 833 717ZM828 664 828 664 833 664 834 663 833 659 829 658 827 659ZM844 716 844 722 846 724 851 721 845 715ZM840 658 838 663 840 666 842 667 845 661 840 658ZM865 715 865 716 866 721 870 723 870 723 872 714 870 713ZM816 690 821 687 818 684 815 684 815 688ZM750 604 760 608 761 606 761 595 753 596ZM829 656 829 658 833 659 836 657 835 654 830 654ZM868 668 875 668 873 663 869 665ZM842 699 840 701 840 702 846 705 849 701 847 699ZM808 680 810 684 815 684 814 678 812 676 811 676ZM837 683 830 681 829 686 832 689 837 684ZM811 676 812 676 814 673 813 669 812 669 806 671ZM864 703 865 707 869 707 871 702 867 699ZM859 653 865 653 865 652 864 647 860 648ZM870 694 868 692 863 691 862 692 861 694 862 695 867 699ZM867 699 862 695 860 702 864 703 867 699ZM809 663 803 661 802 662 801 665 805 670ZM819 678 814 678 815 684 815 684 818 684 820 681 820 678ZM838 694 835 696 834 698 840 701 842 699 841 696ZM714 508 720 519 724 520 730 512 722 497ZM824 706 827 702 826 700 822 699 822 699 819 703 822 707ZM855 711 855 711 857 706 851 706 851 707 852 710ZM821 655 821 653 817 650 814 654 816 657ZM731 539 728 536 719 545 722 551 730 550ZM854 716 855 711 852 710 849 713ZM869 665 873 663 873 662 872 659 870 658 869 659 867 663ZM802 674 799 679 799 680 804 682 808 680 802 674Z"/>
<path fill="#3a6db3" d="M703 737 702 739 714 748 715 746 714 733 713 733ZM752 628 752 626 738 626 736 633 740 638 747 637ZM712 656 709 648 700 651 700 656 707 662ZM751 691 748 693 747 699 752 704 757 704 762 696 761 692 760 692ZM734 675 742 672 739 663 734 662 729 666ZM718 706 709 704 708 705 709 713 716 717 720 712ZM668 707 670 697 656 696 661 707ZM847 694 847 699 849 701 850 701 854 698 854 698 852 691ZM862 730 865 735 871 734 871 734 869 726ZM633 574 636 568 634 565 629 563 623 566 628 576ZM923 834 918 837 921 844 925 844 928 839 927 837ZM701 686 697 685 689 689 693 697 699 698 702 691ZM769 650 772 639 763 636 759 641 764 651ZM755 665 753 664 746 674 747 677 749 679 758 678 760 676 760 671ZM671 695 670 697 679 700 682 699 683 689 678 688ZM589 506 584 513 591 526 599 522 598 509ZM672 714 681 720 684 718 685 710 678 707 672 711ZM753 653 751 662 753 664 755 665 762 660 762 653ZM904 723 903 730 905 732 908 732 913 727 911 723 911 722ZM623 526 613 520 605 524 607 536 617 538 622 535ZM736 648 737 648 740 638 736 633 727 635 725 639ZM771 665 762 660 755 665 760 671 771 666ZM774 639 772 639 769 650 771 652 780 652 780 644ZM727 735 723 744 731 752 735 750 738 742ZM849 672 848 672 845 676 846 679 850 680 853 677ZM653 673 647 672 643 679 646 685 655 681ZM745 723 751 729 753 729 761 722 758 717 750 715 745 720ZM687 669 693 665 693 660 685 655 679 662ZM731 752 723 744 715 746 714 748 718 751 729 757ZM748 693 737 689 736 691 734 703 737 705 747 699ZM782 654 782 661 785 664 792 662 794 658 789 652ZM702 703 699 698 693 697 689 701 689 707 696 711 696 711ZM858 805 855 800 850 802 851 810 855 812ZM786 632 782 630 778 632 774 639 780 644 788 641ZM738 742 735 750 744 755 747 753 748 743 744 739ZM727 734 727 735 727 735 738 742 744 739 744 739 735 727 735 727ZM732 653 736 648 725 639 723 640 720 645 722 654ZM668 707 661 707 658 712 668 718 672 714 672 711ZM707 662 700 656 693 660 693 665 701 670 703 670 708 667ZM739 663 743 660 742 651 737 648 736 648 732 653 734 662ZM778 684 775 692 779 699 780 699 787 692 787 691 782 683ZM834 674 838 681 839 681 842 675 839 673 834 673ZM681 720 672 714 668 718 674 723 680 726ZM819 672 819 672 825 674 827 671 823 667 819 669ZM717 674 722 675 729 666 721 661 714 670ZM752 704 747 699 737 705 739 708 749 710ZM727 712 732 704 723 700 718 706 720 712ZM696 711 692 718 695 727 699 727 703 724 703 716 696 711ZM622 535 617 538 616 546 622 553 626 554 628 551 628 539ZM736 691 737 689 737 686 732 680 727 680 722 687 724 691ZM711 694 702 691 699 698 702 703 708 705 709 704 712 696ZM825 674 819 672 819 678 820 678 825 676ZM846 645 845 644 837 648 837 649 842 653 847 649ZM752 628 747 637 753 643 759 641 763 636 762 632ZM705 682 703 670 701 670 694 678 697 685 701 686ZM664 683 660 684 656 696 656 696 656 696 670 697 670 697 671 695ZM788 641 780 644 780 652 782 654 789 652 789 651 788 642ZM764 651 759 641 753 643 750 649 753 653 762 653ZM713 682 715 685 722 687 727 680 722 675 717 674ZM830 681 837 683 838 681 834 674 829 680ZM655 681 646 685 645 688 656 696 660 684ZM751 691 760 692 758 678 749 679ZM737 686 737 689 748 693 751 691 749 679 747 677ZM844 722 839 722 838 725 842 729 845 728 846 724ZM607 536 605 524 599 522 591 526 590 528 593 530 600 541ZM713 610 722 614 725 605 722 600 720 598 712 604ZM753 596 761 595 763 593 763 587 759 583 755 583 747 586 746 588ZM863 663 862 664 865 670 866 670 868 668 869 665 867 663ZM833 659 834 663 838 663 840 658 836 657ZM713 682 705 682 701 686 702 691 711 694 715 685ZM824 755 830 749 825 744 822 746 819 750ZM834 673 839 673 843 668 842 667 840 666 834 669 833 672ZM849 657 849 657 849 659 856 661 858 656 857 655 857 655ZM666 674 663 670 656 670 653 673 655 681 660 684 664 683 665 682ZM892 694 892 694 896 702 899 703 900 702 902 696 894 693ZM794 677 789 680 794 686 795 687 799 680 799 679ZM838 769 841 768 842 763 835 761 833 766 833 766ZM678 707 685 710 689 707 689 701 682 699 679 700ZM874 681 874 677 871 675 868 678 870 682ZM791 641 797 634 798 632 795 630 786 632 788 641 788 642ZM771 666 760 671 760 676 769 679 770 679 774 672ZM629 563 626 554 622 553 616 558 622 564 623 566ZM675 683 665 682 664 683 671 695 678 688ZM757 756 757 756 756 763 764 768 769 760 768 758ZM653 661 656 670 663 670 665 664 660 658ZM871 734 872 738 880 740 880 740 882 734 878 731 871 734ZM645 688 646 685 643 679 636 677 641 687 642 689ZM750 715 749 710 739 708 738 714 745 720ZM850 689 849 685 845 684 844 686 845 689ZM723 700 722 698 712 696 709 704 718 706ZM808 688 809 689 815 688 815 684 815 684 810 684Z"/>
<path fill="#4fbd5c" d="M648 374 652 359 626 357 629 382 634 382ZM340 197 356 202 363 197 342 187ZM479 553 486 564 492 576 505 568 509 555 503 547 500 536ZM535 354 525 339 513 349 513 355 531 358ZM635 502 639 494 637 486 631 483 618 491 627 505ZM446 314 447 300 443 295 435 295 431 299 430 309 435 317ZM1144 702 1142 694 1136 690 1131 692 1124 702 1130 714 1142 710ZM446 522 451 524 469 539 479 553 500 536 499 532 486 522 476 505 475 503ZM487 258 501 261 507 254 506 244 493 244 487 258ZM783 489 784 489 797 488 798 488 799 477 793 471 781 473ZM1090 757 1089 765 1091 768 1107 763 1106 756ZM430 309 431 299 416 295 412 309 414 313ZM632 300 626 313 643 325 649 312 643 300ZM626 340 609 327 600 332 600 355 600 355 609 358 624 355ZM722 575 722 563 709 567 708 571 713 576ZM877 462 867 465 867 477 881 477 882 474ZM467 353 476 348 477 346 473 336 463 332 462 332 456 348ZM618 491 631 483 630 479 618 473 610 477 610 478 614 490ZM770 679 778 684 782 683 784 680 783 674 774 672ZM724 449 739 449 742 431 719 432 717 436ZM781 472 764 478 769 489 783 489 781 473ZM748 743 753 743 759 737 753 729 751 729 744 739 744 739ZM356 202 340 197 329 210 343 222 343 222 354 215ZM612 318 609 327 626 340 641 333 643 329 643 325 626 313ZM1067 769 1071 763 1063 754 1056 760 1055 764 1066 769ZM1056 760 1046 752 1045 753 1041 764 1046 770 1050 770 1055 764ZM432 336 435 329 433 324 417 325 419 335 421 335 424 338ZM720 457 726 469 742 469 743 455 739 449 724 449ZM447 332 452 329 449 316 446 314 435 317 433 324 435 329ZM753 619 748 615 738 619 737 624 738 626 752 626ZM1076 761 1080 766 1089 765 1090 757 1087 753 1079 754ZM731 719 721 723 727 734 735 727 732 720ZM1068 742 1077 740 1077 735 1065 736ZM456 235 465 245 475 244 476 243 474 233 456 231ZM732 704 734 703 736 691 724 691 722 698 723 700ZM762 696 772 704 779 699 775 692 766 690 761 692ZM1124 702 1131 692 1121 683 1118 695 1115 701ZM614 293 607 307 612 318 626 313 632 300 627 294ZM641 276 656 271 655 269 644 253 639 257 641 276ZM1086 741 1089 748 1097 746 1100 725 1100 724 1095 728ZM432 336 436 344 446 344 447 332 435 329ZM859 459 867 465 877 462 878 460 874 449 867 446ZM777 589 784 587 785 585 785 579 784 577 773 576 770 584ZM446 344 451 349 456 348 462 332 452 329 447 332ZM722 551 719 545 710 544 708 549 710 555 720 557ZM783 674 785 670 785 664 782 661 771 664 771 665 771 666 774 672ZM452 329 462 332 463 332 468 315 464 312 449 316ZM797 597 797 597 786 595 783 601 783 604 788 607 796 606ZM783 489 769 489 768 491 773 508 783 502 784 489ZM417 325 433 324 435 317 430 309 414 313 418 318 415 324ZM367 217 372 213 369 200 363 197 356 202 354 215ZM636 663 631 669 635 676 639 666ZM723 563 722 563 722 575 723 576 733 575 734 573 731 563 730 562ZM731 551 730 550 722 551 720 557 723 563 730 562ZM367 217 354 215 343 222 359 228 367 230ZM1123 677 1123 677 1121 683 1131 692 1136 690 1137 686 1131 675 1128 674ZM451 349 446 344 436 344 433 349 434 350 446 361ZM720 557 710 555 707 561 709 567 722 563 723 563ZM722 654 720 645 709 646 709 648 712 656 721 656ZM1087 753 1089 748 1086 741 1078 741 1077 752 1079 754ZM743 348 757 354 769 348 770 344 764 333 743 338ZM822 645 826 643 827 634 821 633 819 643 820 644ZM1128 674 1127 666 1123 666 1123 677ZM1077 777 1078 777 1079 776 1080 766 1076 761 1071 763 1067 769ZM712 439 704 456 705 457 720 457 724 449 717 436ZM1095 728 1095 728 1081 735 1077 735 1077 740 1078 741 1086 741ZM1131 675 1135 671 1133 662 1127 666 1128 674ZM784 489 783 502 794 508 794 508 797 488ZM798 647 789 651 789 652 794 658 796 657 800 652ZM1091 768 1091 774 1093 776 1099 777 1109 766 1107 763ZM753 653 750 649 742 651 743 660 751 662ZM424 338 433 349 436 344 432 336ZM1090 757 1106 756 1106 756 1097 746 1089 748 1087 753Z"/>
<path fill="#5f8bb5" d="M620 458 622 460 634 464 635 463 640 450 634 444 625 444ZM637 486 639 494 649 496 656 490 655 481 645 479ZM685 491 684 505 701 503 702 500 695 489 691 488ZM626 505 613 510 613 520 623 526 628 522ZM653 464 654 450 653 449 640 450 635 463 644 468ZM621 439 611 438 607 440 606 456 620 458 625 444ZM667 495 667 502 684 506 684 505 685 491 673 487ZM655 481 656 490 667 495 673 487 672 479 663 474ZM634 444 640 431 633 421 627 423 621 439 625 444ZM722 494 714 493 702 500 701 503 703 508 714 508 722 497ZM699 455 704 456 712 439 699 437 694 449ZM643 513 655 507 649 496 639 494 635 502ZM690 473 691 488 695 489 706 481 707 474 707 474ZM639 559 638 551 628 551 626 554 629 563 634 565ZM684 506 683 516 701 517 703 508 701 503 684 505ZM635 463 634 464 630 479 631 483 637 486 645 479 644 468ZM642 571 648 565 647 559 639 559 634 565 636 568ZM621 439 627 423 613 419 610 421 611 438ZM695 529 701 518 701 517 683 516 682 517 684 528ZM676 431 659 418 658 419 653 433 656 440 670 439ZM606 456 604 458 610 477 618 473 622 460 620 458ZM656 490 649 496 655 507 660 508 664 507 667 502 667 495ZM651 544 650 544 647 548 649 555 660 557 660 549ZM673 487 685 491 691 488 690 473 686 469 685 469 672 479ZM628 551 638 551 640 548 636 539 628 539ZM638 551 639 559 647 559 649 555 647 548 640 548ZM666 543 666 542 659 535 651 544 660 549ZM662 470 653 464 644 468 645 479 655 481 663 474ZM695 489 702 500 714 493 706 481ZM618 473 630 479 634 464 622 460Z"/>
<path fill="#7098bf" d="M376 388 366 364 357 361 355 368 324 373 324 375 327 378 340 392 361 407 362 408ZM444 433 440 426 407 419 400 431 403 432 417 443 421 464 420 475 425 473ZM425 473 420 475 419 484 417 501 428 509 436 518 446 522 475 503 469 491 463 484 462 482ZM407 419 398 396 376 388 362 408 382 422 400 431ZM425 473 462 482 457 464 449 443 444 433ZM398 396 407 419 440 426 438 422 424 401 411 387Z"/>
<path fill="#8cb4b4" d="M1100 725 1118 742 1123 742 1133 733 1129 717 1106 720 1106 721 1100 724ZM1124 702 1115 701 1111 713 1106 720 1129 717 1130 714ZM1157 702 1144 702 1142 710 1148 714 1160 708ZM1148 714 1153 727 1171 717 1171 713 1160 708Z"/>
<path fill="#6e9cc0" d="M1037 752 1045 753 1046 752 1047 750 1045 742 1034 745 1033 745ZM1013 775 1013 775 1016 770 1010 760 1005 762 1002 770 1003 772 1005 774ZM1031 777 1029 769 1023 766 1016 770 1013 775 1026 781ZM1022 755 1033 756 1037 752 1033 745 1024 746ZM1022 755 1012 756 1010 760 1016 770 1023 766ZM1012 756 1022 755 1022 755 1024 746 1012 747 1007 748ZM1038 778 1046 770 1041 764 1035 763 1029 769 1031 777ZM1031 794 1038 791 1041 785 1038 778 1031 777 1026 781 1025 783ZM1026 781 1013 775 1013 775 1011 788 1017 789 1025 783ZM998 758 1005 762 1010 760 1012 756 1007 748 1003 750ZM1022 755 1022 755 1023 766 1029 769 1035 763 1033 756ZM1005 762 998 758 998 758 993 763 993 767 1002 770ZM1037 752 1033 756 1035 763 1041 764 1045 753Z"/>
<path fill="#7aa1c0" d="M672 479 685 469 675 456 673 456 662 470 663 474ZM676 454 670 439 656 440 653 449 654 450 673 456 675 456ZM699 437 692 426 686 426 683 430 686 448 694 449ZM685 469 686 469 699 455 694 449 686 448 676 454 675 456ZM686 448 683 430 676 431 670 439 676 454ZM640 450 653 449 656 440 653 433 640 431 634 444ZM673 456 654 450 653 464 662 470Z"/>
<path fill="#9dc0c2" d="M832 447 826 435 822 436 815 447 820 454 828 457ZM828 458 839 461 848 457 847 448 843 445 832 447 828 457ZM791 396 790 395 778 404 776 423 793 423 795 419ZM844 490 845 479 839 476 830 477 825 488 830 494ZM830 430 830 426 821 414 814 416 811 430 822 436 826 435ZM798 488 797 488 794 508 803 510 811 502 808 492ZM803 458 805 446 795 445 789 456 794 460ZM814 473 810 470 799 477 798 488 808 492 817 487ZM811 430 814 416 808 414 795 419 793 423 797 429 806 432ZM814 416 821 414 823 410 820 400 811 393 802 397 808 414ZM776 423 776 423 775 434 781 440 791 440 797 429 793 423ZM820 454 809 462 810 470 814 473 824 470 828 458 828 457ZM830 477 824 470 814 473 817 487 825 488ZM830 494 825 488 817 487 808 492 811 502 822 506 829 498ZM793 471 799 477 810 470 809 462 803 458 794 460ZM811 502 803 510 808 522 824 517 822 506ZM789 456 781 455 777 458 781 472 781 473 793 471 794 460ZM822 436 811 430 806 432 805 446 815 447ZM839 476 839 461 828 458 824 470 830 477ZM797 429 791 440 795 445 805 446 805 446 806 432ZM843 445 842 434 830 430 826 435 832 447ZM802 397 791 396 795 419 808 414ZM795 445 791 440 781 440 781 455 789 456ZM815 447 805 446 805 446 803 458 809 462 820 454Z"/>
<path fill="#3570b8" d="M560 452 554 441 550 441 542 453 544 457 555 461 558 459ZM524 453 528 454 534 450 533 441 525 437 517 442ZM509 425 513 430 513 442 517 442 525 437 525 426 517 421ZM534 450 528 454 530 465 537 468 544 457 542 453ZM530 424 525 426 525 437 533 441 542 434 541 431ZM530 465 528 454 524 453 511 462 511 464 523 470ZM576 453 572 447 560 452 558 459 569 464 575 462ZM550 441 542 434 533 441 534 450 542 453ZM524 453 517 442 513 442 511 462ZM544 457 537 468 539 472 553 472 555 461Z"/>
<path fill="#d0582a" d="M499 393 502 405 518 407 519 406 520 394 508 386ZM520 394 530 387 530 385 520 373 514 373 508 381 508 386Z"/>
<path fill="#8e1e2a" d="M610 478 599 479 594 485 595 491 606 497 614 490ZM689 608 688 612 693 619 701 612 700 610 694 606Z"/>
<path fill="#9dc0b8" d="M1158 645 1151 640 1147 645 1148 651 1156 650 1158 647ZM1159 630 1155 631 1151 640 1151 640 1158 645 1163 641 1164 636Z"/>
<path fill="#4d7db0" d="M530 363 531 358 513 355 509 361 514 373 520 373ZM727 635 724 629 715 627 712 631 712 634 723 640 725 639ZM633 574 637 585 639 585 645 581 646 577 642 571 636 568ZM829 600 836 604 842 601 842 593 831 592ZM558 459 555 461 553 472 555 476 566 479 568 478 569 464ZM698 637 695 645 700 651 709 648 709 646 708 640ZM1201 664 1206 659 1205 656 1197 655 1195 659ZM520 394 519 406 528 407 538 399 538 394 530 387ZM1195 638 1201 642 1206 640 1208 635 1208 634 1198 632 1194 636ZM695 645 698 637 697 636 691 631 686 633 682 639 686 647ZM672 551 678 551 680 548 677 535 677 535 666 542 666 543ZM637 585 633 574 628 576 630 580 631 587ZM692 622 691 631 697 636 703 629 702 624 692 622ZM1196 650 1200 647 1201 642 1195 638 1192 647ZM712 634 712 631 703 629 697 636 698 637 708 640Z"/>
<path fill="#1f2a85" d="M823 683 823 687 829 686 830 681 829 680 827 679ZM941 735 947 732 947 731 942 725 939 730ZM957 735 960 742 967 739 967 736 958 733ZM939 730 942 725 942 722 935 723 932 729ZM968 754 968 760 972 761 977 757 976 753 970 752ZM855 646 855 645 850 643 846 645 847 649 849 651 854 650ZM961 753 960 757 964 762 968 760 968 754 961 753ZM990 794 986 791 979 794 979 798 987 802 989 801ZM879 599 876 607 877 610 884 612 891 609 888 601ZM912 702 911 703 918 707 925 704 920 698ZM961 753 968 754 970 752 968 747 963 747ZM864 738 865 735 862 730 859 729 857 733 860 738ZM979 794 977 792 974 791 969 793 968 799 969 800 978 799 979 798ZM986 791 987 786 982 782 978 784 977 792 979 794ZM948 789 946 788 938 789 938 789 937 792 940 797 943 797 948 792ZM833 800 831 799 830 798 822 801 822 806 830 809ZM918 776 921 769 916 766 913 766 912 769 912 773 914 775ZM888 765 884 770 885 773 894 776 894 775 895 775 892 766 890 764ZM815 798 815 792 807 791 807 800 811 801ZM833 766 828 764 824 767 825 774 826 774 830 773 833 766ZM939 715 937 713 934 708 929 710 933 716ZM895 674 897 676 901 676 903 673 903 668 898 667 894 670ZM920 760 926 764 927 763 929 759 925 752 920 753 919 758ZM898 667 903 668 907 663 901 660 897 663ZM805 657 804 653 800 652 796 657 802 662 803 661ZM850 665 847 669 848 672 849 672 856 670 856 666ZM925 705 928 710 929 710 934 708 929 700ZM973 769 973 773 974 774 982 775 985 769 981 765 973 769ZM888 630 890 631 899 629 899 627 895 619 887 623 887 623ZM865 778 867 777 866 767 861 769 859 774 861 777ZM885 652 893 651 894 650 888 643 886 643 883 651 884 652ZM860 716 859 717 860 723 866 721 865 716ZM885 661 886 659 885 652 884 652 878 658 880 661ZM808 649 809 647 804 643 800 644 798 645 798 647 800 652 804 653ZM947 731 947 732 951 736 957 735 958 733 956 733 951 728ZM898 721 894 728 901 731 903 730 904 723 903 722ZM982 775 974 774 975 782 978 784 982 782 983 776ZM932 800 931 807 932 808 935 809 940 805 938 801ZM813 734 816 735 821 729 821 729 817 726 811 728 810 730ZM842 753 844 756 852 756 854 755 854 752 851 748 844 749 842 751ZM871 797 873 797 875 790 873 787 868 787 866 794ZM925 720 927 722 932 719 933 716 929 710 928 710 925 713ZM856 783 856 782 852 777 847 779 847 783 850 786ZM907 663 903 668 903 673 909 674 911 670 911 668 909 663ZM834 698 829 695 826 700 827 702 831 703 831 703ZM826 774 825 774 822 775 820 780 822 784 827 786 830 782ZM824 726 821 729 821 729 824 734 830 733 831 730 828 726ZM935 723 932 719 927 722 927 724 932 729 932 729ZM864 755 861 760 867 766 868 765 869 764 869 755ZM884 784 884 784 882 776 875 775 873 777 875 783ZM890 709 887 714 887 720 896 718 897 712ZM880 740 880 740 876 746 880 751 880 751 886 746 886 745ZM850 665 849 660 845 661 842 667 843 668 847 669ZM828 693 823 692 823 693 822 699 826 700 829 695ZM794 743 797 737 793 733 789 732 787 735 789 744ZM876 690 876 689 875 688 871 688 868 692 870 694 873 695ZM1003 772 1002 770 993 767 991 769 993 777 994 777ZM898 644 902 642 900 636 894 640ZM942 722 942 725 947 731 951 728 943 720ZM974 791 977 792 978 784 975 782 970 784ZM968 760 964 762 963 766 973 769 973 769 972 761ZM841 768 845 771 847 771 849 764 843 762 842 763ZM807 761 809 765 815 768 818 765 818 761 816 759 808 759ZM993 767 993 763 986 758 982 760 981 765 985 769 991 769ZM823 714 820 710 819 710 815 714 816 716 820 717ZM932 729 930 733 931 735 936 738 940 738 941 735 939 730 932 729ZM1021 843 1029 847 1031 850 1036 848 1037 840 1034 836ZM888 643 894 650 897 648 898 644 894 640 893 639ZM977 807 978 799 969 800 968 805 976 808ZM985 749 987 756 993 754 994 751 987 746ZM904 651 900 656 901 660 907 663 909 663 904 651ZM843 715 839 718 839 722 844 722 844 716ZM898 644 897 648 904 651 904 651 902 645 902 642ZM876 714 877 716 883 713 881 709 877 710ZM921 815 923 814 925 807 920 802 916 811ZM861 769 866 767 867 766 861 760 859 760 856 766ZM976 753 977 751 976 745 971 743 968 747 970 752ZM875 668 875 668 868 668 866 670 871 673 876 670ZM936 738 931 735 928 741 932 745 934 745ZM890 752 888 755 891 760 894 758 895 752ZM917 691 922 689 922 688 919 682 915 684ZM841 797 836 801 841 807 841 807 848 801 847 800ZM993 754 998 758 998 758 1003 750 995 752 994 751ZM795 781 791 783 791 783 795 791 801 784ZM818 684 821 687 823 687 823 687 823 683 820 681ZM991 778 983 776 982 782 987 786 990 784ZM1070 840 1075 844 1081 833 1081 833 1079 831 1078 831 1070 839ZM970 784 975 782 974 774 973 773 967 776 968 784ZM900 791 902 788 901 785 893 785 894 791 896 792Z"/>
<path fill="#8fb3b8" d="M641 593 637 600 646 606 647 605 651 595 651 594ZM682 639 672 639 671 642 673 649 685 650 686 647ZM661 652 653 651 649 659 653 661 660 658 662 652ZM673 649 671 653 673 661 676 663 679 662 685 655 685 650ZM662 632 663 626 655 622 650 626 652 634 657 637ZM671 642 662 643 661 652 662 652 671 653 673 649ZM652 634 646 637 645 645 650 646 657 640 657 637ZM647 605 658 608 661 602 658 597 651 595ZM639 666 642 666 649 659 643 654 636 663ZM685 650 685 655 693 660 700 656 700 651 695 645 686 647ZM649 659 649 659 653 651 650 646 645 645 644 653 643 654ZM655 617 645 613 641 624 650 626 655 622ZM672 637 662 632 657 637 657 640 662 643 671 642 672 639ZM641 624 645 613 644 612 636 612 638 620 640 625ZM647 605 646 606 644 612 645 613 655 617 659 612 658 608ZM652 634 650 626 641 624 640 625 646 635 646 637ZM637 600 641 593 639 585 637 585 631 587 634 600ZM634 600 636 612 644 612 646 606 637 600ZM655 617 655 622 663 626 667 623 666 614 659 612ZM660 658 665 664 673 661 671 653 662 652ZM667 623 663 626 662 632 672 637 676 625ZM661 652 662 643 657 640 650 646 653 651Z"/>
<path fill="#5d87b3" d="M1181 741 1183 745 1183 745 1199 745 1206 761 1210 745 1214 732 1196 724 1184 731ZM1212 677 1222 672 1220 666 1210 668 1210 669ZM1221 691 1210 682 1207 682 1196 692 1192 697 1199 705 1221 703 1222 692ZM1232 649 1242 644 1242 638 1234 635 1231 637ZM1202 669 1201 670 1201 674 1207 682 1210 682 1212 677 1210 669ZM1207 682 1201 674 1195 677 1196 692ZM1227 663 1220 666 1220 666 1222 672 1223 673 1230 673 1231 670ZM1223 673 1221 691 1222 692 1222 692 1228 677 1230 673ZM1242 638 1242 630 1237 625 1234 629 1234 635ZM1214 732 1215 727 1221 709 1221 703 1199 705 1196 724ZM1153 751 1163 768 1166 768 1166 766 1183 745 1181 741 1155 744ZM1236 661 1238 655 1232 650 1230 651 1227 656 1228 660ZM1212 677 1210 682 1221 691 1223 673 1222 672ZM1232 649 1232 650 1238 655 1242 646 1242 644ZM1184 731 1196 724 1199 705 1192 697 1191 697 1178 700 1171 713 1171 717ZM1210 668 1220 666 1220 666 1216 657 1210 660ZM1231 670 1235 663 1236 661 1228 660 1227 663ZM1234 629 1237 625 1235 622 1227 624 1227 625Z"/>
<path fill="#3e7ac0" d="M1017 829 1020 817 1011 815 1008 818 1010 828ZM1064 846 1057 841 1049 844 1049 846 1055 854 1059 855 1063 853ZM1063 853 1059 855 1058 866 1068 866 1071 857ZM1079 776 1078 777 1081 786 1084 788 1089 788 1093 776 1091 774ZM1025 812 1019 802 1011 804 1009 806 1011 815 1020 817 1023 816ZM1047 860 1050 866 1058 866 1059 855 1055 854ZM1089 765 1080 766 1079 776 1091 774 1091 768Z"/>
<path fill="#c8552c" d="M541 431 542 434 550 441 554 441 560 435 559 424 547 423ZM535 415 530 424 541 431 547 423 544 414Z"/>
<path fill="#9cc0c2" d="M1077 752 1064 750 1063 754 1071 763 1076 761 1079 754ZM1078 741 1077 740 1068 742 1064 749 1064 750 1077 752Z"/>
</g>
</g>
<polygon fill="#4e7bad" points="343.0,307.0 352.0,302.0 358.0,318.0 352.0,323.0" opacity="0.7"/>
<polygon fill="#56645c" points="600.0,620.0 603.0,619.0 604.0,623.0 601.0,624.0" />
<polygon fill="#56645c" points="606.0,627.0 609.0,626.0 610.0,630.0 607.0,631.0" />
<polygon fill="#7d8a86" points="459.0,730.0 462.0,729.0 463.0,733.0 460.0,734.0" />
<polygon fill="#7d9aa0" points="1146.0,605.0 1149.0,603.0 1151.0,607.0 1148.0,609.0" />
<polyline fill="none" stroke="#9450ad" stroke-width="2" opacity="0.85" points="444.0,180.0 458.4,196.8 468.0,201.6 492.0,201.6 504.0,192.0 540.0,194.4 588.0,196.8 602.4,206.4 614.4,223.0 636.0,242.4 684.0,244.8 744.0,252.0 808.8,268.8 840.0,290.4 861.6,312.0 880.0,303.0 964.0,299.0 1002.5,289.0 1037.6,280.0 1072.6,278.0 1107.6,269.5 1126.0,272.0 1149.0,276.5 1183.4,267.3 1201.8,260.4 1229.4,265.0 1263.8,258.0 1286.8,258.0 1321.3,269.6 1367.2,276.5 1406.3,274.2 1426.0,267.3"/>
<polyline fill="none" stroke="#9450ad" stroke-width="2" opacity="0.85" points="458.4,196.8 460.8,232.8"/>
<polyline fill="none" stroke="#9450ad" stroke-width="2" opacity="0.85" points="590.4,180.0 602.4,206.4"/>
<polyline fill="none" stroke="#9450ad" stroke-width="2" opacity="0.85" points="684.0,244.8 736.8,212.4 756.0,201.6 823.2,186.0 871.0,180.0"/>
<polyline fill="none" stroke="#9450ad" stroke-width="2" opacity="0.85" points="861.6,312.0 844.8,336.0 835.2,379.2"/>
<polyline fill="none" stroke="#9450ad" stroke-width="2" opacity="0.85" points="861.6,312.0 880.0,294.0 888.8,266.0 906.0,224.0 910.0,201.0 915.0,182.0"/>
<polyline fill="none" stroke="#9450ad" stroke-width="2" opacity="0.85" points="888.0,278.4 900.0,240.0"/>
<polyline fill="none" stroke="#9450ad" stroke-width="2" opacity="0.85" points="964.0,297.5 960.5,262.5 930.8,210.0 922.0,182.0"/>
<polyline fill="none" stroke="#9450ad" stroke-width="2" opacity="0.85" points="946.5,182.0 985.0,187.0 1016.6,183.8 1072.6,185.5 1107.6,190.8 1132.0,192.5 1149.0,191.5 1190.3,184.6 1195.0,180.0"/>
<polyline fill="none" stroke="#9450ad" stroke-width="2" opacity="0.85" points="1016.6,183.8 1020.0,196.0 1037.6,213.5 1055.0,231.0 1065.6,250.0 1072.6,276.5"/>
<polyline fill="none" stroke="#9450ad" stroke-width="2" opacity="0.85" points="1132.0,192.5 1125.0,210.0 1121.6,250.0 1125.0,269.5"/>
<polyline fill="none" stroke="#9450ad" stroke-width="2" opacity="0.85" points="1176.5,189.0 1155.9,249.0 1146.7,276.5"/>
<polyline fill="none" stroke="#9450ad" stroke-width="2" opacity="0.85" points="1201.8,260.4 1222.5,244.3 1240.9,226.0 1254.6,193.8 1259.0,180.0"/>
<polyline fill="none" stroke="#9450ad" stroke-width="2" opacity="0.85" points="1339.6,180.0 1344.2,214.5 1355.7,249.0 1369.5,276.5 1385.6,317.8 1392.5,340.8 1385.6,375.3"/>
<polyline fill="none" stroke="#9450ad" stroke-width="2" opacity="0.85" points="1422.4,198.4 1413.2,249.0 1406.3,274.2 1415.5,329.3 1426.0,340.8"/>
<polyline fill="none" stroke="#9450ad" stroke-width="2" opacity="0.85" points="1386.0,567.0 1360.0,575.0 1330.0,585.0"/>
<polyline fill="none" stroke="#9450ad" stroke-width="2" opacity="0.85" points="1386.0,567.0 1426.0,585.0"/>
<g font-family="Liberation Sans, sans-serif">
<text x="857" y="228" font-size="18" fill="#9a9a92" opacity="0.55" letter-spacing="1">TEXAS</text>
<text x="1088" y="232" font-size="17" fill="#9a9a92" opacity="0.55" letter-spacing="1">MISSISSIPPI</text>
<text x="1034" y="270" font-size="17" fill="#9a9a92" opacity="0.55" letter-spacing="1">LOUISIANA</text>
<text x="1200" y="194" font-size="17" fill="#9a9a92" opacity="0.55" letter-spacing="1">ALABAMA</text>
<text x="1320" y="194" font-size="17" fill="#9a9a92" opacity="0.55" letter-spacing="1">GEORGIA</text>
<text x="1362" y="331" font-size="17" fill="#9a9a92" opacity="0.55" letter-spacing="1">FLORIDA</text>
<text x="463" y="193" font-size="8" fill="#f0f0f0" >Tucson</text>
<circle cx="460" cy="196" r="2.2" fill="#f4f4f4"/>
<text x="462" y="232" font-size="8" fill="#f0f0f0" >Nogales</text>
<text x="713" y="210" font-size="8" fill="#f0f0f0" >Odessa</text>
<circle cx="737" cy="212" r="2.2" fill="#f4f4f4"/>
<text x="762" y="225" font-size="8" fill="#f0f0f0" >San Angelo</text>
<circle cx="800" cy="228" r="2.2" fill="#f4f4f4"/>
<text x="907" y="220" font-size="8" fill="#f0f0f0" >Waco</text>
<circle cx="906" cy="223" r="2.2" fill="#f4f4f4"/>
<text x="988" y="219" font-size="8" fill="#f0f0f0" >Nacogdoches</text>
<circle cx="987" cy="222" r="2.2" fill="#f4f4f4"/>
<text x="889" y="276" font-size="8" fill="#f0f0f0" >Austin</text>
<circle cx="887" cy="277" r="2.2" fill="#f4f4f4"/>
<text x="966" y="297" font-size="8" fill="#f0f0f0" >Houston</text>
<circle cx="964" cy="297" r="2.2" fill="#f4f4f4"/>
<text x="866" y="309" font-size="8" fill="#f0f0f0" >San Antonio</text>
<circle cx="863" cy="313" r="2.2" fill="#f4f4f4"/>
<text x="786" y="316" font-size="8" fill="#f0f0f0" >Acuña</text>
<text x="799" y="330" font-size="8" fill="#f0f0f0" >Piedras</text>
<text x="799" y="339" font-size="8" fill="#f0f0f0" >Negras</text>
<text x="834" y="388" font-size="8" fill="#f0f0f0" >Laredo</text>
<text x="902" y="370" font-size="8" fill="#f0f0f0" >Corpus</text>
<text x="902" y="379" font-size="8" fill="#f0f0f0" >Christi</text>
<circle cx="899" cy="383" r="2.2" fill="#f4f4f4"/>
<text x="875" y="441" font-size="8" fill="#f0f0f0" >McAllen</text>
<circle cx="872" cy="444" r="2.2" fill="#f4f4f4"/>
<text x="897" y="452" font-size="8" fill="#f0f0f0" >Brownsville</text>
<text x="1107" y="193" font-size="8" fill="#f0f0f0" >Jackson</text>
<circle cx="1120" cy="197" r="2.2" fill="#f4f4f4"/>
<text x="1263" y="236" font-size="8" fill="#f0f0f0" >Dothan</text>
<circle cx="1286" cy="240" r="2.2" fill="#f4f4f4"/>
<text x="1326" y="234" font-size="8" fill="#f0f0f0" >Albany</text>
<text x="1202" y="271" font-size="8" fill="#f0f0f0" >Mobile</text>
<circle cx="1200" cy="262" r="2.2" fill="#f4f4f4"/>
<text x="1258" y="280" font-size="8" fill="#f0f0f0" >Panama City</text>
<circle cx="1277" cy="284" r="2.2" fill="#f4f4f4"/>
<text x="1322" y="268" font-size="8" fill="#f0f0f0" >Tallahassee</text>
<circle cx="1320" cy="271" r="2.2" fill="#f4f4f4"/>
<text x="1093" y="302" font-size="8" fill="#f0f0f0" >New Orleans</text>
<circle cx="1136" cy="292" r="2.2" fill="#f4f4f4"/>
<text x="1372" y="370" font-size="8" fill="#f0f0f0" >Tampa</text>
<circle cx="1382" cy="373" r="2.2" fill="#f4f4f4"/>
<text x="1378" y="392" font-size="8" fill="#f0f0f0" >St Petersburg</text>
<text x="1400" y="424" font-size="8" fill="#f0f0f0" >Cape Co</text>
<circle cx="1397" cy="426" r="2.2" fill="#f4f4f4"/>
<text x="483" y="524" font-size="8" fill="#f0f0f0" >La Paz</text>
<text x="1358" y="562" font-size="8" fill="#f0f0f0" >Havana</text>
<text x="1343" y="589" font-size="8" fill="#f0f0f0" >Pinar del Rio</text>
<circle cx="1338" cy="592" r="2.2" fill="#f4f4f4"/>
<text x="1372" y="610" font-size="8" fill="#f0f0f0" >Nueva Gerona</text>
<text x="625" y="651" font-size="8" fill="#f0f0f0" >Puerto</text>
<text x="622" y="661" font-size="8" fill="#f0f0f0" >Vallarta</text>
<text x="640" y="732" font-size="8" fill="#f0f0f0" >Manzanillo</text>
<text x="668" y="759" font-size="8" fill="#f0f0f0" >Ciudad Lázaro Cárdenas</text>
<text x="899" y="638" font-size="8" fill="#f0f0f0" >Tuxpan de</text>
<text x="899" y="647" font-size="8" fill="#f0f0f0" >Rodriguez Cano</text>
<text x="903" y="669" font-size="8" fill="#f0f0f0" >Poza Rica</text>
<text x="918" y="680" font-size="8" fill="#f0f0f0" >Martínez de La Torre</text>
<text x="997" y="752" font-size="8" fill="#f0f0f0" >Coatzacoalcos</text>
<text x="1178" y="786" font-size="8" fill="#f0f0f0" >Belmopan</text>
<circle cx="1178" cy="782" r="2.2" fill="#f4f4f4"/>
<text x="1103" y="804" font-size="8" fill="#f0f0f0" >las Casas</text>
<text x="1186" y="838" font-size="8" fill="#f0f0f0" >Puerto</text>
<text x="1186" y="847" font-size="8" fill="#f0f0f0" >Barrios</text>
<text x="1216" y="841" font-size="8" fill="#f0f0f0" >La Ceiba</text>
<circle cx="1234" cy="843" r="2.2" fill="#f4f4f4"/>
<text x="1270" y="835" font-size="8" fill="#f0f0f0" >Trujillo</text>
<circle cx="1268" cy="838" r="2.2" fill="#f4f4f4"/>
<text x="1340" y="851" font-size="8" fill="#f0f0f0" >Puerto</text>
<text x="1337" y="860" font-size="8" fill="#f0f0f0" >Lempira</text>
<circle cx="1338" cy="863" r="2.2" fill="#f4f4f4"/>
<text x="1113" y="851" font-size="8" fill="#f0f0f0" >Cobán</text>
<circle cx="1125" cy="856" r="2.2" fill="#f4f4f4"/>
<text x="1150" y="865" font-size="8" fill="#f0f0f0" >San Pedro Sula</text>
<text x="1068" y="858" font-size="8" fill="#f0f0f0" >enango</text>
<text x="1413" y="707" font-size="8" fill="#f0f0f0" >CAY</text>
<text x="1412" y="565" font-size="8" fill="#f0f0f0" >Ma</text>
<circle cx="1413" cy="568" r="2.2" fill="#f4f4f4"/>
<rect x="1383" y="564" width="5" height="5" fill="#e0303a" stroke="#fff" stroke-width="0.8"/>
<text x="455" y="296" font-size="8" fill="#8fb4e6" opacity="0.75">SONORA</text>
<text x="470" y="326" font-size="8" fill="#8fb4e6" opacity="0.75">Hermosillo</text>
<text x="600" y="365" font-size="8" fill="#8fb4e6" opacity="0.75">CHIHUAHUA</text>
<text x="600" y="390" font-size="8" fill="#8fb4e6" opacity="0.75">Cuauhtémoc</text>
<text x="645" y="354" font-size="8" fill="#8fb4e6" opacity="0.75">Ciudad Delicias</text>
<text x="632" y="398" font-size="8" fill="#8fb4e6" opacity="0.75">Hidalgo del</text>
<text x="640" y="408" font-size="8" fill="#8fb4e6" opacity="0.75">Parral</text>
<text x="720" y="406" font-size="8" fill="#8fb4e6" opacity="0.75">COAHUILA</text>
<text x="770" y="462" font-size="8" fill="#8fb4e6" opacity="0.75">Monterrey</text>
<text x="812" y="482" font-size="8" fill="#8fb4e6" opacity="0.75">NUEVO LEÓN</text>
<text x="832" y="523" font-size="8" fill="#8fb4e6" opacity="0.75">TAMAULIPAS</text>
<text x="850" y="540" font-size="8" fill="#8fb4e6" opacity="0.75">Ciudad Victoria</text>
<text x="850" y="577" font-size="8" fill="#8fb4e6" opacity="0.75">Ciudad Mante</text>
<text x="705" y="588" font-size="8" fill="#8fb4e6" opacity="0.75">ZACATECAS</text>
<text x="513" y="460" font-size="8" fill="#8fb4e6" opacity="0.75">Los Mochis</text>
<text x="425" y="468" font-size="8" fill="#8fb4e6" opacity="0.75">BAJA</text>
<text x="418" y="476" font-size="8" fill="#8fb4e6" opacity="0.75">CALIFORNIA</text>
<text x="428" y="484" font-size="8" fill="#8fb4e6" opacity="0.75">SUR</text>
<text x="1175" y="725" font-size="8" fill="#8fb4e6" opacity="0.75">QUINTANA</text>
<text x="1185" y="734" font-size="8" fill="#8fb4e6" opacity="0.75">ROO</text>
<text x="1195" y="739" font-size="8" fill="#8fb4e6" opacity="0.75">Chetumal</text>
<text x="476" y="496" font-size="9" fill="#c7d0d8" font-style="italic" font-weight="bold" opacity="0.85">Gulf of California</text>
<text x="1227" y="413" font-size="9" fill="#b9c3cc" font-style="italic" font-weight="bold" opacity="0.85">Gulf of Mexico</text>
</g></svg>
<div class="a" style="left:0;top:9px;width:19px;height:26px;background:#e6e9ec"></div>
<svg class="a" style="left:4px;top:13px" width="12" height="18" viewBox="0 0 12 18"><path d="M10,1 L2,9 L10,17" fill="none" stroke="#444" stroke-width="1.3"/></svg>
<div class="a" style="left:1070px;top:572px;width:24px;height:27px;background:#dcdde0;border-radius:2px"></div>
<svg class="a" style="left:1072px;top:576px" width="20" height="18" viewBox="0 0 20 18"><path d="M10,1 L1,9.5 L3.5,9.5 L3.5,17 L8,17 L8,12 L12,12 L12,17 L16.5,17 L16.5,9.5 L19,9.5 Z" fill="#4a4d55"/></svg>
<div class="a" style="left:1070px;top:607px;width:24px;height:53px;background:#dcdde0;border-radius:2px"></div>
<div class="a" style="left:1070px;top:632px;width:24px;height:1px;background:#b0b2b6"></div>
<svg class="a" style="left:1074px;top:610px" width="16" height="48" viewBox="0 0 16 48"><path d="M8,2 L8,16 M1,9 L15,9 M1,38 L15,38" fill="none" stroke="#4a4d55" stroke-width="3"/></svg>

</div>
</body></html>
